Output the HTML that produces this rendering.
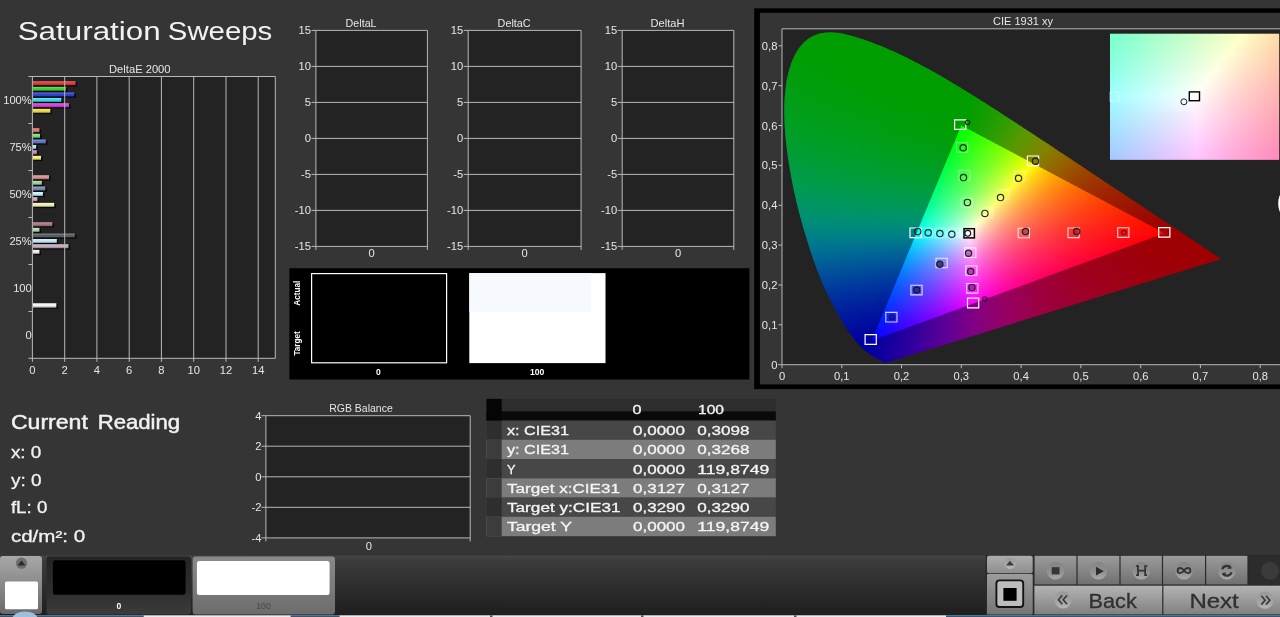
<!DOCTYPE html>
<html lang="en"><head><meta charset="utf-8"><title>Saturation Sweeps</title><style>html,body{margin:0;padding:0;background:#353535;overflow:hidden}svg{display:block;will-change:transform}</style></head><body><svg width="1280" height="617" viewBox="0 0 1280 617" font-family="Liberation Sans, sans-serif" fill="#e6e6e6" shape-rendering="auto"><defs><linearGradient id="gloss" x1="0" y1="0" x2="0" y2="1"><stop offset="0" stop-color="#fff" stop-opacity=".35"/><stop offset=".45" stop-color="#fff" stop-opacity=".05"/><stop offset="1" stop-color="#000" stop-opacity=".35"/></linearGradient><clipPath id="locus"><polygon points="886.1,362.7 885.8,362.6 885.7,362.6 885.6,362.7 885.6,362.8 885.5,362.9 885.2,362.9 884.8,362.8 884.1,362.5 883.2,362.0 882.0,361.4 880.7,360.6 879.4,359.9 878.1,359.1 876.9,358.4 875.8,357.7 874.8,357.2 873.9,356.7 873.1,356.2 872.2,355.6 871.2,355.0 870.1,354.3 868.9,353.5 867.7,352.6 866.5,351.7 865.2,350.7 863.7,349.5 862.2,348.1 860.5,346.4 858.7,344.5 856.8,342.3 854.7,339.9 852.5,337.1 850.2,333.9 847.7,330.4 845.1,326.3 842.3,321.8 839.3,316.6 836.1,311.0 832.7,304.6 829.1,297.7 825.4,290.0 821.7,281.6 818.1,272.5 814.4,262.5 810.7,251.9 807.1,240.5 803.5,228.5 800.0,215.9 796.7,203.0 793.7,189.8 791.1,176.5 788.8,163.2 786.9,150.1 785.5,137.3 784.6,124.8 784.2,112.8 784.4,101.3 785.3,90.4 786.7,80.1 788.8,70.7 791.6,62.1 795.0,54.6 799.0,48.1 803.5,42.7 808.5,38.5 813.9,35.4 819.6,33.4 825.5,32.4 831.7,32.3 837.9,32.8 844.3,33.9 850.7,35.5 857.2,37.4 863.6,39.5 870.0,41.8 876.2,44.2 882.4,46.6 888.4,49.2 894.4,51.8 900.2,54.5 906.1,57.3 911.8,60.2 917.6,63.2 923.3,66.2 929.1,69.3 934.8,72.5 940.5,75.8 946.1,79.1 951.8,82.4 957.4,85.8 963.1,89.2 968.7,92.7 974.4,96.2 980.0,99.8 985.6,103.3 991.3,106.9 997.0,110.6 1002.6,114.2 1008.2,117.9 1013.9,121.5 1019.5,125.2 1025.1,128.9 1030.7,132.6 1036.3,136.3 1041.9,139.9 1047.5,143.6 1053.0,147.3 1058.5,150.9 1063.9,154.5 1069.4,158.1 1074.7,161.7 1080.1,165.2 1085.4,168.7 1090.6,172.2 1095.7,175.7 1100.8,179.1 1105.9,182.4 1110.8,185.7 1115.7,188.9 1120.5,192.1 1125.2,195.2 1129.7,198.2 1134.2,201.2 1138.5,204.1 1142.7,206.8 1146.7,209.5 1150.5,212.1 1154.2,214.5 1157.8,216.9 1161.3,219.2 1164.7,221.5 1167.9,223.6 1171.0,225.6 1173.9,227.5 1176.6,229.3 1179.2,231.1 1181.8,232.8 1184.2,234.4 1186.4,235.8 1188.4,237.2 1190.2,238.4 1191.8,239.5 1193.6,240.6 1195.7,242.0 1198.2,243.7 1200.9,245.5 1203.5,247.2 1206.0,248.9 1208.0,250.2 1209.8,251.4 1211.2,252.4 1212.5,253.2 1213.6,253.9 1214.7,254.6 1215.7,255.3 1216.8,256.1 1218.1,256.9 1219.5,257.8 1221.2,259.0"/></clipPath><clipPath id="tri"><polygon points="1164.6,233.2 961.3,125.5 871.7,340.8"/></clipPath><linearGradient id="o0"><stop offset=".000" stop-color="#009e00"/><stop offset=".493" stop-color="#009e00"/><stop offset=".593" stop-color="#219e00"/><stop offset=".747" stop-color="#639600"/><stop offset=".864" stop-color="#897b00"/><stop offset="1.000" stop-color="#995600"/></linearGradient><linearGradient id="o1"><stop offset=".000" stop-color="#009e01"/><stop offset=".493" stop-color="#009e00"/><stop offset=".579" stop-color="#1d9e00"/><stop offset=".692" stop-color="#4d9b00"/><stop offset=".814" stop-color="#7e8700"/><stop offset=".896" stop-color="#907000"/><stop offset="1.000" stop-color="#9a5400"/></linearGradient><linearGradient id="o2"><stop offset=".000" stop-color="#009e01"/><stop offset=".489" stop-color="#009e00"/><stop offset=".575" stop-color="#1d9e00"/><stop offset=".688" stop-color="#4d9b00"/><stop offset=".810" stop-color="#7e8700"/><stop offset=".896" stop-color="#916e00"/><stop offset="1.000" stop-color="#9a5200"/></linearGradient><linearGradient id="o3"><stop offset=".000" stop-color="#009e02"/><stop offset=".489" stop-color="#019e00"/><stop offset=".575" stop-color="#1e9e00"/><stop offset=".683" stop-color="#4e9b00"/><stop offset=".805" stop-color="#7f8600"/><stop offset=".891" stop-color="#916e00"/><stop offset="1.000" stop-color="#9a5000"/></linearGradient><linearGradient id="o4"><stop offset=".000" stop-color="#009e03"/><stop offset=".484" stop-color="#009e00"/><stop offset=".570" stop-color="#1e9e00"/><stop offset=".679" stop-color="#4e9b00"/><stop offset=".801" stop-color="#7f8600"/><stop offset=".887" stop-color="#926d00"/><stop offset="1.000" stop-color="#9b4f00"/></linearGradient><linearGradient id="o5"><stop offset=".000" stop-color="#009e04"/><stop offset=".480" stop-color="#009e00"/><stop offset=".561" stop-color="#1c9e00"/><stop offset=".674" stop-color="#4e9b00"/><stop offset=".796" stop-color="#808600"/><stop offset=".882" stop-color="#926c00"/><stop offset="1.000" stop-color="#9b4d00"/></linearGradient><linearGradient id="o6"><stop offset=".000" stop-color="#009e05"/><stop offset=".480" stop-color="#019e00"/><stop offset=".561" stop-color="#1d9e00"/><stop offset=".670" stop-color="#4e9b00"/><stop offset=".792" stop-color="#808500"/><stop offset=".882" stop-color="#936a00"/><stop offset="1.000" stop-color="#9b4b00"/></linearGradient><linearGradient id="o7"><stop offset=".000" stop-color="#009e05"/><stop offset=".095" stop-color="#009e00"/><stop offset=".475" stop-color="#009e00"/><stop offset=".561" stop-color="#1f9e00"/><stop offset=".670" stop-color="#509a00"/><stop offset=".792" stop-color="#828300"/><stop offset=".878" stop-color="#936900"/><stop offset="1.000" stop-color="#9b4900"/></linearGradient><linearGradient id="o8"><stop offset=".000" stop-color="#009e06"/><stop offset=".109" stop-color="#009e00"/><stop offset=".471" stop-color="#009e00"/><stop offset=".552" stop-color="#1d9e00"/><stop offset=".665" stop-color="#509a00"/><stop offset=".787" stop-color="#828300"/><stop offset=".878" stop-color="#946700"/><stop offset="1.000" stop-color="#9c4700"/></linearGradient><linearGradient id="o9"><stop offset=".000" stop-color="#009e07"/><stop offset=".118" stop-color="#009e00"/><stop offset=".471" stop-color="#009e00"/><stop offset=".552" stop-color="#1e9e00"/><stop offset=".661" stop-color="#519a00"/><stop offset=".783" stop-color="#838200"/><stop offset=".873" stop-color="#946600"/><stop offset="1.000" stop-color="#9c4500"/></linearGradient><linearGradient id="o10"><stop offset=".000" stop-color="#009e08"/><stop offset=".131" stop-color="#009e00"/><stop offset=".466" stop-color="#009e00"/><stop offset=".548" stop-color="#1e9e00"/><stop offset=".656" stop-color="#519a00"/><stop offset=".778" stop-color="#838200"/><stop offset=".869" stop-color="#956600"/><stop offset="1.000" stop-color="#9c4400"/></linearGradient><linearGradient id="o11"><stop offset=".000" stop-color="#009e09"/><stop offset=".145" stop-color="#009e00"/><stop offset=".466" stop-color="#019e00"/><stop offset=".548" stop-color="#1f9e00"/><stop offset=".652" stop-color="#519a00"/><stop offset=".774" stop-color="#848100"/><stop offset=".864" stop-color="#956500"/><stop offset="1.000" stop-color="#9c4200"/></linearGradient><linearGradient id="o12"><stop offset=".000" stop-color="#009e0a"/><stop offset=".158" stop-color="#009e00"/><stop offset=".462" stop-color="#009e00"/><stop offset=".543" stop-color="#1f9e00"/><stop offset=".647" stop-color="#519a00"/><stop offset=".769" stop-color="#848100"/><stop offset=".864" stop-color="#966300"/><stop offset="1.000" stop-color="#9c4000"/></linearGradient><linearGradient id="o13"><stop offset=".000" stop-color="#009e0b"/><stop offset=".172" stop-color="#009e00"/><stop offset=".457" stop-color="#009e00"/><stop offset=".534" stop-color="#1d9e00"/><stop offset=".643" stop-color="#519a00"/><stop offset=".765" stop-color="#858000"/><stop offset=".860" stop-color="#966200"/><stop offset="1.000" stop-color="#9d3e00"/></linearGradient><linearGradient id="o14"><stop offset=".000" stop-color="#009e0c"/><stop offset=".181" stop-color="#009e00"/><stop offset=".457" stop-color="#019e00"/><stop offset=".538" stop-color="#209e00"/><stop offset=".643" stop-color="#549a00"/><stop offset=".760" stop-color="#858000"/><stop offset=".855" stop-color="#966100"/><stop offset="1.000" stop-color="#9d3d00"/></linearGradient><linearGradient id="o15"><stop offset=".000" stop-color="#009e0d"/><stop offset=".195" stop-color="#009e00"/><stop offset=".452" stop-color="#009e00"/><stop offset=".529" stop-color="#1e9e00"/><stop offset=".638" stop-color="#549a00"/><stop offset=".756" stop-color="#867f00"/><stop offset=".851" stop-color="#976000"/><stop offset="1.000" stop-color="#9d3b00"/></linearGradient><linearGradient id="o16"><stop offset=".000" stop-color="#009e0f"/><stop offset=".208" stop-color="#009e00"/><stop offset=".448" stop-color="#009e00"/><stop offset=".525" stop-color="#1e9e00"/><stop offset=".633" stop-color="#549a00"/><stop offset=".751" stop-color="#867f00"/><stop offset=".846" stop-color="#975f00"/><stop offset="1.000" stop-color="#9d3900"/></linearGradient><linearGradient id="o17"><stop offset=".000" stop-color="#009e10"/><stop offset=".222" stop-color="#009e00"/><stop offset=".448" stop-color="#009e00"/><stop offset=".525" stop-color="#1f9e00"/><stop offset=".629" stop-color="#549900"/><stop offset=".747" stop-color="#877e00"/><stop offset=".842" stop-color="#975e00"/><stop offset="1.000" stop-color="#9d3700"/></linearGradient><linearGradient id="o18"><stop offset=".000" stop-color="#009e11"/><stop offset=".235" stop-color="#009e00"/><stop offset=".443" stop-color="#009e00"/><stop offset=".520" stop-color="#1f9e00"/><stop offset=".624" stop-color="#590"/><stop offset=".688" stop-color="#748e00"/><stop offset=".742" stop-color="#877e00"/><stop offset=".842" stop-color="#985c00"/><stop offset="1.000" stop-color="#9d3600"/></linearGradient><linearGradient id="o19"><stop offset=".000" stop-color="#009e12"/><stop offset=".244" stop-color="#009e00"/><stop offset=".439" stop-color="#009e00"/><stop offset=".511" stop-color="#1c9e00"/><stop offset=".620" stop-color="#590"/><stop offset=".683" stop-color="#748e00"/><stop offset=".738" stop-color="#887d00"/><stop offset=".837" stop-color="#985b00"/><stop offset="1.000" stop-color="#9d3400"/></linearGradient><linearGradient id="o20"><stop offset=".000" stop-color="#009e13"/><stop offset=".258" stop-color="#009e00"/><stop offset=".439" stop-color="#009e00"/><stop offset=".516" stop-color="#209e00"/><stop offset=".615" stop-color="#590"/><stop offset=".679" stop-color="#758d00"/><stop offset=".733" stop-color="#887c00"/><stop offset=".833" stop-color="#985a00"/><stop offset="1.000" stop-color="#9d3200"/></linearGradient><linearGradient id="o21"><stop offset=".000" stop-color="#009e15"/><stop offset=".271" stop-color="#009e00"/><stop offset=".434" stop-color="#009e00"/><stop offset=".507" stop-color="#1e9e00"/><stop offset=".611" stop-color="#590"/><stop offset=".674" stop-color="#758d00"/><stop offset=".729" stop-color="#897c00"/><stop offset=".828" stop-color="#985900"/><stop offset="1.000" stop-color="#9d3100"/></linearGradient><linearGradient id="o22"><stop offset=".000" stop-color="#009e16"/><stop offset=".285" stop-color="#009e00"/><stop offset=".434" stop-color="#019e00"/><stop offset=".507" stop-color="#209e00"/><stop offset=".606" stop-color="#569900"/><stop offset=".670" stop-color="#768d00"/><stop offset=".719" stop-color="#887d00"/><stop offset=".819" stop-color="#985900"/><stop offset="1.000" stop-color="#9e2f00"/></linearGradient><linearGradient id="o23"><stop offset=".000" stop-color="#009e17"/><stop offset=".299" stop-color="#009e00"/><stop offset=".430" stop-color="#009e00"/><stop offset=".502" stop-color="#1f9e00"/><stop offset=".602" stop-color="#569900"/><stop offset=".665" stop-color="#778c00"/><stop offset=".715" stop-color="#897c00"/><stop offset=".774" stop-color="#946600"/><stop offset=".855" stop-color="#9b4c00"/><stop offset="1.000" stop-color="#9e2e00"/></linearGradient><linearGradient id="o24"><stop offset=".000" stop-color="#009e19"/><stop offset=".308" stop-color="#009e00"/><stop offset=".425" stop-color="#009e00"/><stop offset=".498" stop-color="#1f9e00"/><stop offset=".597" stop-color="#569900"/><stop offset=".656" stop-color="#758d00"/><stop offset=".710" stop-color="#897b00"/><stop offset=".774" stop-color="#956400"/><stop offset=".855" stop-color="#9b4a00"/><stop offset="1.000" stop-color="#9e2c00"/></linearGradient><linearGradient id="o25"><stop offset=".000" stop-color="#009e1a"/><stop offset=".321" stop-color="#009e00"/><stop offset=".425" stop-color="#009e00"/><stop offset=".498" stop-color="#219e00"/><stop offset=".593" stop-color="#569900"/><stop offset=".652" stop-color="#768d00"/><stop offset=".706" stop-color="#8a7b00"/><stop offset=".769" stop-color="#966300"/><stop offset=".851" stop-color="#9b4900"/><stop offset="1.000" stop-color="#9e2a00"/></linearGradient><linearGradient id="o26"><stop offset=".000" stop-color="#009e1c"/><stop offset=".335" stop-color="#009e00"/><stop offset=".421" stop-color="#009e00"/><stop offset=".493" stop-color="#209e00"/><stop offset=".588" stop-color="#579900"/><stop offset=".647" stop-color="#768d00"/><stop offset=".701" stop-color="#8a7a00"/><stop offset=".765" stop-color="#966200"/><stop offset=".846" stop-color="#9c4800"/><stop offset="1.000" stop-color="#9e2900"/></linearGradient><linearGradient id="o27"><stop offset=".000" stop-color="#009e1d"/><stop offset=".348" stop-color="#009e00"/><stop offset=".416" stop-color="#009e00"/><stop offset=".484" stop-color="#1e9e00"/><stop offset=".584" stop-color="#579900"/><stop offset=".643" stop-color="#778c00"/><stop offset=".697" stop-color="#8b7900"/><stop offset=".760" stop-color="#966100"/><stop offset=".842" stop-color="#9c4700"/><stop offset="1.000" stop-color="#9e2700"/></linearGradient><linearGradient id="o28"><stop offset=".000" stop-color="#009e1f"/><stop offset=".416" stop-color="#009e00"/><stop offset=".484" stop-color="#1f9e00"/><stop offset=".579" stop-color="#579900"/><stop offset=".638" stop-color="#778c00"/><stop offset=".692" stop-color="#8b7800"/><stop offset=".751" stop-color="#966100"/><stop offset=".837" stop-color="#9c4600"/><stop offset="1.000" stop-color="#9e2600"/></linearGradient><linearGradient id="o29"><stop offset=".000" stop-color="#009e20"/><stop offset=".412" stop-color="#009e00"/><stop offset=".480" stop-color="#1f9e00"/><stop offset=".575" stop-color="#579900"/><stop offset=".633" stop-color="#788b00"/><stop offset=".688" stop-color="#8c7800"/><stop offset=".747" stop-color="#966000"/><stop offset=".833" stop-color="#9c4500"/><stop offset="1.000" stop-color="#9e2400"/></linearGradient><linearGradient id="o30"><stop offset=".000" stop-color="#009e22"/><stop offset=".407" stop-color="#009e00"/><stop offset=".471" stop-color="#1c9e00"/><stop offset=".561" stop-color="#529a00"/><stop offset=".643" stop-color="#7f8600"/><stop offset=".715" stop-color="#936a00"/><stop offset=".846" stop-color="#9d3f00"/><stop offset="1.000" stop-color="#9e2300"/></linearGradient><linearGradient id="o31"><stop offset=".000" stop-color="#009e24"/><stop offset=".407" stop-color="#009e00"/><stop offset=".471" stop-color="#1e9e00"/><stop offset=".557" stop-color="#529a00"/><stop offset=".633" stop-color="#7d8800"/><stop offset=".706" stop-color="#936b00"/><stop offset=".842" stop-color="#9d3e00"/><stop offset="1.000" stop-color="#9e2100"/></linearGradient><linearGradient id="o32"><stop offset=".000" stop-color="#009e25"/><stop offset=".403" stop-color="#009e01"/><stop offset=".466" stop-color="#1e9e00"/><stop offset=".552" stop-color="#539a00"/><stop offset=".629" stop-color="#7e8700"/><stop offset=".701" stop-color="#936a00"/><stop offset=".837" stop-color="#9d3d00"/><stop offset="1.000" stop-color="#9e2000"/></linearGradient><linearGradient id="o33"><stop offset=".000" stop-color="#009e27"/><stop offset=".403" stop-color="#019e02"/><stop offset=".466" stop-color="#209e00"/><stop offset=".548" stop-color="#539a00"/><stop offset=".624" stop-color="#7f8600"/><stop offset=".697" stop-color="#946900"/><stop offset=".833" stop-color="#9d3c00"/><stop offset="1.000" stop-color="#9e1f00"/></linearGradient><linearGradient id="o34"><stop offset=".000" stop-color="#009e29"/><stop offset=".398" stop-color="#009e04"/><stop offset=".462" stop-color="#1f9e00"/><stop offset=".543" stop-color="#539a00"/><stop offset=".620" stop-color="#7f8600"/><stop offset=".692" stop-color="#946800"/><stop offset=".828" stop-color="#9d3b00"/><stop offset="1.000" stop-color="#9e1d00"/></linearGradient><linearGradient id="o35"><stop offset=".000" stop-color="#009e2b"/><stop offset=".394" stop-color="#009e06"/><stop offset=".452" stop-color="#1c9e00"/><stop offset=".538" stop-color="#539a00"/><stop offset=".615" stop-color="#808500"/><stop offset=".688" stop-color="#946700"/><stop offset=".824" stop-color="#9d3a00"/><stop offset="1.000" stop-color="#9e1c00"/></linearGradient><linearGradient id="o36"><stop offset=".000" stop-color="#009e2d"/><stop offset=".394" stop-color="#009e08"/><stop offset=".452" stop-color="#1e9e01"/><stop offset=".534" stop-color="#549a00"/><stop offset=".611" stop-color="#818500"/><stop offset=".683" stop-color="#956500"/><stop offset=".824" stop-color="#9d3700"/><stop offset="1.000" stop-color="#9e1a00"/></linearGradient><linearGradient id="o37"><stop offset=".000" stop-color="#009e2f"/><stop offset=".389" stop-color="#009e0b"/><stop offset=".448" stop-color="#1e9e03"/><stop offset=".525" stop-color="#519a00"/><stop offset=".602" stop-color="#7f8600"/><stop offset=".674" stop-color="#946600"/><stop offset=".814" stop-color="#9d3700"/><stop offset="1.000" stop-color="#9e1900"/></linearGradient><linearGradient id="o38"><stop offset=".000" stop-color="#009d31"/><stop offset=".385" stop-color="#009e0d"/><stop offset=".439" stop-color="#1b9e06"/><stop offset=".520" stop-color="#519a00"/><stop offset=".597" stop-color="#808500"/><stop offset=".670" stop-color="#956500"/><stop offset=".814" stop-color="#9d3500"/><stop offset="1.000" stop-color="#9e1800"/></linearGradient><linearGradient id="o39"><stop offset=".000" stop-color="#009d33"/><stop offset=".385" stop-color="#009e0f"/><stop offset=".439" stop-color="#1d9e08"/><stop offset=".516" stop-color="#519a00"/><stop offset=".593" stop-color="#818500"/><stop offset=".665" stop-color="#956400"/><stop offset=".810" stop-color="#9d3400"/><stop offset="1.000" stop-color="#9e1600"/></linearGradient><linearGradient id="o40"><stop offset=".000" stop-color="#009d35"/><stop offset=".380" stop-color="#009e12"/><stop offset=".434" stop-color="#1c9e0b"/><stop offset=".511" stop-color="#529a01"/><stop offset=".584" stop-color="#7f8600"/><stop offset=".656" stop-color="#956500"/><stop offset=".724" stop-color="#9b4a00"/><stop offset=".801" stop-color="#9d3400"/><stop offset="1.000" stop-color="#9e1500"/></linearGradient><linearGradient id="o41"><stop offset=".000" stop-color="#009d38"/><stop offset=".380" stop-color="#019e14"/><stop offset=".434" stop-color="#1f9e0d"/><stop offset=".507" stop-color="#529a03"/><stop offset=".579" stop-color="#808500"/><stop offset=".652" stop-color="#956400"/><stop offset=".724" stop-color="#9c4700"/><stop offset=".801" stop-color="#9d3200"/><stop offset="1.000" stop-color="#9e1400"/></linearGradient><linearGradient id="o42"><stop offset=".000" stop-color="#009d3a"/><stop offset=".376" stop-color="#009e17"/><stop offset=".430" stop-color="#1e9e10"/><stop offset=".502" stop-color="#529a05"/><stop offset=".575" stop-color="#818500"/><stop offset=".647" stop-color="#966200"/><stop offset=".719" stop-color="#9c4600"/><stop offset=".796" stop-color="#9d3100"/><stop offset="1.000" stop-color="#9e1300"/></linearGradient><linearGradient id="o43"><stop offset=".000" stop-color="#009d3c"/><stop offset=".371" stop-color="#009e1a"/><stop offset=".421" stop-color="#1b9e13"/><stop offset=".498" stop-color="#529a08"/><stop offset=".570" stop-color="#818400"/><stop offset=".643" stop-color="#966100"/><stop offset=".715" stop-color="#9c4400"/><stop offset=".792" stop-color="#9e2f00"/><stop offset="1.000" stop-color="#9e1100"/></linearGradient><linearGradient id="o44"><stop offset=".000" stop-color="#009d3f"/><stop offset=".371" stop-color="#009e1d"/><stop offset=".421" stop-color="#1d9e16"/><stop offset=".489" stop-color="#4f9a0c"/><stop offset=".561" stop-color="#808501"/><stop offset=".633" stop-color="#966200"/><stop offset=".706" stop-color="#9c4500"/><stop offset=".783" stop-color="#9e2f00"/><stop offset="1.000" stop-color="#9e1000"/></linearGradient><linearGradient id="o45"><stop offset=".000" stop-color="#009c41"/><stop offset=".367" stop-color="#009e20"/><stop offset=".416" stop-color="#1d9e19"/><stop offset=".484" stop-color="#4f9a0f"/><stop offset=".557" stop-color="#818503"/><stop offset=".629" stop-color="#966100"/><stop offset=".701" stop-color="#9c4300"/><stop offset=".783" stop-color="#9e2d00"/><stop offset="1.000" stop-color="#9e0f00"/></linearGradient><linearGradient id="o46"><stop offset=".000" stop-color="#009c44"/><stop offset=".362" stop-color="#009e23"/><stop offset=".407" stop-color="#199e1d"/><stop offset=".480" stop-color="#509a12"/><stop offset=".552" stop-color="#828406"/><stop offset=".620" stop-color="#966100"/><stop offset=".692" stop-color="#9c4300"/><stop offset=".774" stop-color="#9e2d00"/><stop offset="1.000" stop-color="#9e0e00"/></linearGradient><linearGradient id="o47"><stop offset=".000" stop-color="#009c46"/><stop offset=".362" stop-color="#009e26"/><stop offset=".412" stop-color="#1f9e20"/><stop offset=".475" stop-color="#509a16"/><stop offset=".548" stop-color="#828309"/><stop offset=".615" stop-color="#976000"/><stop offset=".688" stop-color="#9c4200"/><stop offset=".769" stop-color="#9e2c00"/><stop offset="1.000" stop-color="#9e0d00"/></linearGradient><linearGradient id="o48"><stop offset=".000" stop-color="#009b49"/><stop offset=".357" stop-color="#009e2a"/><stop offset=".403" stop-color="#1b9e24"/><stop offset=".471" stop-color="#509a1a"/><stop offset=".543" stop-color="#83820c"/><stop offset=".611" stop-color="#975f01"/><stop offset=".683" stop-color="#9c4100"/><stop offset=".769" stop-color="#9e2a00"/><stop offset="1.000" stop-color="#9e0c00"/></linearGradient><linearGradient id="o49"><stop offset=".000" stop-color="#009b4c"/><stop offset=".357" stop-color="#019e2d"/><stop offset=".403" stop-color="#1d9e28"/><stop offset=".466" stop-color="#519a1e"/><stop offset=".534" stop-color="#828410"/><stop offset=".602" stop-color="#975f04"/><stop offset=".674" stop-color="#9c4100"/><stop offset=".760" stop-color="#9e2900"/><stop offset="1.000" stop-color="#9e0a00"/></linearGradient><linearGradient id="o50"><stop offset=".000" stop-color="#009b4e"/><stop offset=".353" stop-color="#009d31"/><stop offset=".398" stop-color="#1d9e2c"/><stop offset=".462" stop-color="#519a22"/><stop offset=".529" stop-color="#828313"/><stop offset=".597" stop-color="#975e06"/><stop offset=".670" stop-color="#9d3f00"/><stop offset=".756" stop-color="#9e2800"/><stop offset=".864" stop-color="#9e1600"/><stop offset="1.000" stop-color="#9e0900"/></linearGradient><linearGradient id="o51"><stop offset=".000" stop-color="#009a51"/><stop offset=".348" stop-color="#009d35"/><stop offset=".389" stop-color="#199d30"/><stop offset=".452" stop-color="#4d9b27"/><stop offset=".520" stop-color="#818418"/><stop offset=".588" stop-color="#975f09"/><stop offset=".665" stop-color="#9d3e00"/><stop offset=".751" stop-color="#9e2700"/><stop offset=".860" stop-color="#9e1500"/><stop offset="1.000" stop-color="#9e0800"/></linearGradient><linearGradient id="o52"><stop offset=".000" stop-color="#009a54"/><stop offset=".348" stop-color="#009d39"/><stop offset=".394" stop-color="#1f9d34"/><stop offset=".448" stop-color="#4d9a2b"/><stop offset=".516" stop-color="#82831c"/><stop offset=".584" stop-color="#975d0c"/><stop offset=".661" stop-color="#9d3c01"/><stop offset=".747" stop-color="#9e2600"/><stop offset=".860" stop-color="#9e1400"/><stop offset="1.000" stop-color="#9e0700"/></linearGradient><linearGradient id="o53"><stop offset=".000" stop-color="#009957"/><stop offset=".344" stop-color="#009d3e"/><stop offset=".385" stop-color="#1b9d39"/><stop offset=".443" stop-color="#4d9a30"/><stop offset=".511" stop-color="#838320"/><stop offset=".579" stop-color="#985c0f"/><stop offset=".652" stop-color="#9d3c03"/><stop offset=".742" stop-color="#9e2400"/><stop offset=".855" stop-color="#9e1300"/><stop offset="1.000" stop-color="#9e0600"/></linearGradient><linearGradient id="o54"><stop offset=".000" stop-color="#00985a"/><stop offset=".339" stop-color="#009c42"/><stop offset=".380" stop-color="#1a9d3e"/><stop offset=".439" stop-color="#4e9a35"/><stop offset=".507" stop-color="#838224"/><stop offset=".570" stop-color="#985d12"/><stop offset=".643" stop-color="#9d3c06"/><stop offset=".733" stop-color="#9e2400"/><stop offset=".851" stop-color="#9e1200"/><stop offset="1.000" stop-color="#9e0500"/></linearGradient><linearGradient id="o55"><stop offset=".000" stop-color="#00975d"/><stop offset=".339" stop-color="#009c47"/><stop offset=".380" stop-color="#1d9c42"/><stop offset=".434" stop-color="#4e9a3a"/><stop offset=".502" stop-color="#848128"/><stop offset=".566" stop-color="#985b16"/><stop offset=".638" stop-color="#9d3b08"/><stop offset=".729" stop-color="#9e2300"/><stop offset=".846" stop-color="#9e1100"/><stop offset="1.000" stop-color="#9e0400"/></linearGradient><linearGradient id="o56"><stop offset=".000" stop-color="#009660"/><stop offset=".335" stop-color="#009b4b"/><stop offset=".376" stop-color="#1c9c47"/><stop offset=".430" stop-color="#4e9940"/><stop offset=".493" stop-color="#82822e"/><stop offset=".561" stop-color="#985919"/><stop offset=".638" stop-color="#9d3809"/><stop offset=".729" stop-color="#9e2000"/><stop offset=".846" stop-color="#9e0f00"/><stop offset="1.000" stop-color="#9e0300"/></linearGradient><linearGradient id="o57"><stop offset=".000" stop-color="#009563"/><stop offset=".335" stop-color="#019a50"/><stop offset=".376" stop-color="#1f9b4c"/><stop offset=".425" stop-color="#4e9845"/><stop offset=".489" stop-color="#838133"/><stop offset=".552" stop-color="#985a1d"/><stop offset=".629" stop-color="#9d380c"/><stop offset=".719" stop-color="#9e2001"/><stop offset=".842" stop-color="#9e0e00"/><stop offset="1.000" stop-color="#9e0200"/></linearGradient><linearGradient id="o58"><stop offset=".000" stop-color="#009467"/><stop offset=".330" stop-color="#095"/><stop offset=".376" stop-color="#229a51"/><stop offset=".443" stop-color="#649346"/><stop offset=".489" stop-color="#877d36"/><stop offset=".543" stop-color="#985b22"/><stop offset=".620" stop-color="#9d380f"/><stop offset=".710" stop-color="#9e2003"/><stop offset=".837" stop-color="#9e0d00"/><stop offset="1.000" stop-color="#9e0200"/></linearGradient><linearGradient id="o59"><stop offset=".000" stop-color="#00936a"/><stop offset=".326" stop-color="#00985a"/><stop offset=".371" stop-color="#219957"/><stop offset=".439" stop-color="#64924b"/><stop offset=".484" stop-color="#877b3b"/><stop offset=".538" stop-color="#985926"/><stop offset=".615" stop-color="#9d3611"/><stop offset=".710" stop-color="#9e1d04"/><stop offset=".837" stop-color="#9e0c00"/><stop offset="1.000" stop-color="#9e0100"/></linearGradient><linearGradient id="o60"><stop offset=".000" stop-color="#00926d"/><stop offset=".326" stop-color="#01975f"/><stop offset=".371" stop-color="#24985c"/><stop offset=".434" stop-color="#649051"/><stop offset=".480" stop-color="#887a40"/><stop offset=".529" stop-color="#985a2b"/><stop offset=".606" stop-color="#9d3615"/><stop offset=".701" stop-color="#9e1d06"/><stop offset=".833" stop-color="#9e0b00"/><stop offset="1.000" stop-color="#9e0000"/></linearGradient><linearGradient id="o61"><stop offset=".000" stop-color="#009070"/><stop offset=".321" stop-color="#009564"/><stop offset=".367" stop-color="#239662"/><stop offset=".430" stop-color="#648f58"/><stop offset=".475" stop-color="#887846"/><stop offset=".525" stop-color="#98582f"/><stop offset=".602" stop-color="#9d3417"/><stop offset=".701" stop-color="#9e1b07"/><stop offset=".837" stop-color="#9e0900"/><stop offset="1.000" stop-color="#9e0000"/></linearGradient><linearGradient id="o62"><stop offset=".000" stop-color="#008f73"/><stop offset=".321" stop-color="#019369"/><stop offset=".362" stop-color="#229467"/><stop offset=".425" stop-color="#648d5e"/><stop offset=".471" stop-color="#89764b"/><stop offset=".520" stop-color="#985633"/><stop offset=".597" stop-color="#9d321a"/><stop offset=".697" stop-color="#9e1909"/><stop offset=".842" stop-color="#9e0700"/><stop offset="1.000" stop-color="#9e0000"/></linearGradient><linearGradient id="o63"><stop offset=".000" stop-color="#008d76"/><stop offset=".317" stop-color="#00916f"/><stop offset=".357" stop-color="#21926d"/><stop offset=".421" stop-color="#648b64"/><stop offset=".466" stop-color="#897450"/><stop offset=".516" stop-color="#995437"/><stop offset=".597" stop-color="#9d2f1b"/><stop offset=".697" stop-color="#9e170a"/><stop offset=".810" stop-color="#9e0900"/><stop offset="1.000" stop-color="#9e0000"/></linearGradient><linearGradient id="o64"><stop offset=".000" stop-color="#008b79"/><stop offset=".312" stop-color="#008e74"/><stop offset=".353" stop-color="#208f72"/><stop offset=".416" stop-color="#63886a"/><stop offset=".462" stop-color="#897256"/><stop offset=".511" stop-color="#99523b"/><stop offset=".588" stop-color="#9d2f1f"/><stop offset=".692" stop-color="#9e160c"/><stop offset=".824" stop-color="#9e0600"/><stop offset="1.000" stop-color="#9e0000"/></linearGradient><linearGradient id="o65"><stop offset=".000" stop-color="#00897c"/><stop offset=".312" stop-color="#018b78"/><stop offset=".353" stop-color="#238c77"/><stop offset=".412" stop-color="#628570"/><stop offset=".457" stop-color="#886f5b"/><stop offset=".507" stop-color="#994f40"/><stop offset=".588" stop-color="#9e2b21"/><stop offset=".692" stop-color="#9e140d"/><stop offset=".837" stop-color="#9e0400"/><stop offset="1.000" stop-color="#9e0000"/></linearGradient><linearGradient id="o66"><stop offset=".000" stop-color="#00867f"/><stop offset=".308" stop-color="#00887d"/><stop offset=".348" stop-color="#21887c"/><stop offset=".407" stop-color="#618276"/><stop offset=".452" stop-color="#886c61"/><stop offset=".502" stop-color="#994d44"/><stop offset=".584" stop-color="#9e2a24"/><stop offset=".688" stop-color="#9e130f"/><stop offset=".846" stop-color="#9e0200"/><stop offset="1.000" stop-color="#9e0000"/></linearGradient><linearGradient id="o67"><stop offset=".000" stop-color="#008481"/><stop offset=".303" stop-color="#008481"/><stop offset=".344" stop-color="#208481"/><stop offset=".407" stop-color="#647d7a"/><stop offset=".448" stop-color="#876966"/><stop offset=".498" stop-color="#994b48"/><stop offset=".579" stop-color="#9e2826"/><stop offset=".688" stop-color="#9e1110"/><stop offset=".855" stop-color="#9e0100"/><stop offset="1.000" stop-color="#9e0000"/></linearGradient><linearGradient id="o68"><stop offset=".000" stop-color="#008184"/><stop offset=".303" stop-color="#018085"/><stop offset=".339" stop-color="#1e8085"/><stop offset=".385" stop-color="#4e7d83"/><stop offset=".430" stop-color="#7c6e73"/><stop offset=".462" stop-color="#8f5b60"/><stop offset=".498" stop-color="#99464a"/><stop offset=".579" stop-color="#9e2528"/><stop offset=".688" stop-color="#9e0f11"/><stop offset=".846" stop-color="#9e0001"/><stop offset="1.000" stop-color="#9e0000"/></linearGradient><linearGradient id="o69"><stop offset=".000" stop-color="#007f86"/><stop offset=".299" stop-color="#007c89"/><stop offset=".339" stop-color="#217b89"/><stop offset=".403" stop-color="#657382"/><stop offset=".443" stop-color="#88606e"/><stop offset=".493" stop-color="#99434e"/><stop offset=".575" stop-color="#9e232b"/><stop offset=".683" stop-color="#9e0d13"/><stop offset=".833" stop-color="#9e0003"/><stop offset="1.000" stop-color="#9e0000"/></linearGradient><linearGradient id="o70"><stop offset=".000" stop-color="#007c89"/><stop offset=".299" stop-color="#01778c"/><stop offset=".339" stop-color="#23768c"/><stop offset=".398" stop-color="#636e86"/><stop offset=".443" stop-color="#895a70"/><stop offset=".493" stop-color="#993e50"/><stop offset=".575" stop-color="#9e202c"/><stop offset=".679" stop-color="#9e0c14"/><stop offset=".814" stop-color="#9e0005"/><stop offset="1.000" stop-color="#9e0000"/></linearGradient><linearGradient id="o71"><stop offset=".000" stop-color="#00798b"/><stop offset=".294" stop-color="#00728f"/><stop offset=".335" stop-color="#217190"/><stop offset=".398" stop-color="#656889"/><stop offset=".439" stop-color="#875675"/><stop offset=".489" stop-color="#983b54"/><stop offset=".570" stop-color="#9d1e2f"/><stop offset=".674" stop-color="#9e0b16"/><stop offset=".842" stop-color="#9e0004"/><stop offset="1.000" stop-color="#9e0000"/></linearGradient><linearGradient id="o72"><stop offset=".000" stop-color="#00758d"/><stop offset=".290" stop-color="#006d91"/><stop offset=".330" stop-color="#1f6b92"/><stop offset=".394" stop-color="#62638c"/><stop offset=".439" stop-color="#885076"/><stop offset=".489" stop-color="#983756"/><stop offset=".570" stop-color="#9d1b30"/><stop offset=".674" stop-color="#9e0917"/><stop offset=".837" stop-color="#9e0005"/><stop offset="1.000" stop-color="#9e0000"/></linearGradient><linearGradient id="o73"><stop offset=".000" stop-color="#00728f"/><stop offset=".290" stop-color="#016894"/><stop offset=".330" stop-color="#226694"/><stop offset=".394" stop-color="#635c8e"/><stop offset=".439" stop-color="#884a77"/><stop offset=".489" stop-color="#983257"/><stop offset=".570" stop-color="#9d1832"/><stop offset=".674" stop-color="#9e0719"/><stop offset=".837" stop-color="#9e0006"/><stop offset="1.000" stop-color="#9e0000"/></linearGradient><linearGradient id="o74"><stop offset=".000" stop-color="#006f91"/><stop offset=".285" stop-color="#006396"/><stop offset=".330" stop-color="#246096"/><stop offset=".394" stop-color="#65568f"/><stop offset=".439" stop-color="#884478"/><stop offset=".489" stop-color="#982e58"/><stop offset=".570" stop-color="#9d1533"/><stop offset=".674" stop-color="#9e051a"/><stop offset=".833" stop-color="#9e0007"/><stop offset="1.000" stop-color="#9e0000"/></linearGradient><linearGradient id="o75"><stop offset=".000" stop-color="#006b92"/><stop offset=".281" stop-color="#005e97"/><stop offset=".321" stop-color="#1e5b98"/><stop offset=".389" stop-color="#615092"/><stop offset=".439" stop-color="#883e79"/><stop offset=".489" stop-color="#98295a"/><stop offset=".570" stop-color="#9d1234"/><stop offset=".674" stop-color="#9e041b"/><stop offset=".828" stop-color="#9e0008"/><stop offset="1.000" stop-color="#9e0000"/></linearGradient><linearGradient id="o76"><stop offset=".000" stop-color="#006894"/><stop offset=".281" stop-color="#015998"/><stop offset=".326" stop-color="#245599"/><stop offset=".389" stop-color="#624a93"/><stop offset=".434" stop-color="#863a7d"/><stop offset=".489" stop-color="#98255b"/><stop offset=".570" stop-color="#9d1036"/><stop offset=".674" stop-color="#9e021c"/><stop offset=".824" stop-color="#9e0009"/><stop offset="1.000" stop-color="#9e0000"/></linearGradient><linearGradient id="o77"><stop offset=".000" stop-color="#006495"/><stop offset=".276" stop-color="#00549a"/><stop offset=".321" stop-color="#21509a"/><stop offset=".389" stop-color="#634493"/><stop offset=".434" stop-color="#86357e"/><stop offset=".489" stop-color="#98215c"/><stop offset=".570" stop-color="#9d0d37"/><stop offset=".674" stop-color="#9e011d"/><stop offset=".819" stop-color="#9e000a"/><stop offset="1.000" stop-color="#9e0000"/></linearGradient><linearGradient id="o78"><stop offset=".000" stop-color="#006196"/><stop offset=".276" stop-color="#014f9b"/><stop offset=".321" stop-color="#234a9b"/><stop offset=".389" stop-color="#643e94"/><stop offset=".439" stop-color="#882e7c"/><stop offset=".489" stop-color="#971d5d"/><stop offset=".570" stop-color="#9d0b38"/><stop offset=".674" stop-color="#9e001e"/><stop offset=".814" stop-color="#9e000c"/><stop offset="1.000" stop-color="#9e0000"/></linearGradient><linearGradient id="o79"><stop offset=".000" stop-color="#005d97"/><stop offset=".271" stop-color="#004a9b"/><stop offset=".317" stop-color="#21459c"/><stop offset=".385" stop-color="#603a95"/><stop offset=".434" stop-color="#862b7f"/><stop offset=".489" stop-color="#97195e"/><stop offset=".570" stop-color="#9d0839"/><stop offset=".674" stop-color="#9e001f"/><stop offset=".814" stop-color="#9e000c"/><stop offset="1.000" stop-color="#9e0001"/></linearGradient><linearGradient id="o80"><stop offset=".000" stop-color="#005a98"/><stop offset=".267" stop-color="#00469c"/><stop offset=".312" stop-color="#1f409c"/><stop offset=".385" stop-color="#613495"/><stop offset=".434" stop-color="#85267f"/><stop offset=".493" stop-color="#98155c"/><stop offset=".575" stop-color="#9d0639"/><stop offset=".679" stop-color="#9e001f"/><stop offset=".819" stop-color="#9e000d"/><stop offset="1.000" stop-color="#9e0001"/></linearGradient><linearGradient id="o81"><stop offset=".000" stop-color="#005699"/><stop offset=".267" stop-color="#01419c"/><stop offset=".312" stop-color="#213b9d"/><stop offset=".385" stop-color="#612f96"/><stop offset=".439" stop-color="#87207d"/><stop offset=".493" stop-color="#97115d"/><stop offset=".575" stop-color="#9d043a"/><stop offset=".679" stop-color="#9e0020"/><stop offset=".819" stop-color="#9e000e"/><stop offset="1.000" stop-color="#9e0002"/></linearGradient><linearGradient id="o82"><stop offset=".000" stop-color="#00529a"/><stop offset=".262" stop-color="#003c9d"/><stop offset=".312" stop-color="#22369d"/><stop offset=".385" stop-color="#622a96"/><stop offset=".439" stop-color="#871c7e"/><stop offset=".493" stop-color="#970e5e"/><stop offset=".575" stop-color="#9d023b"/><stop offset=".679" stop-color="#9e0021"/><stop offset=".819" stop-color="#9e000e"/><stop offset="1.000" stop-color="#9e0002"/></linearGradient><linearGradient id="o83"><stop offset=".000" stop-color="#004f9b"/><stop offset=".262" stop-color="#01389d"/><stop offset=".312" stop-color="#24329d"/><stop offset=".385" stop-color="#622596"/><stop offset=".439" stop-color="#87177e"/><stop offset=".493" stop-color="#970b5f"/><stop offset=".579" stop-color="#9d003b"/><stop offset=".683" stop-color="#9e0021"/><stop offset=".819" stop-color="#9e000f"/><stop offset="1.000" stop-color="#9e0003"/></linearGradient><linearGradient id="o84"><stop offset=".000" stop-color="#004b9b"/><stop offset=".258" stop-color="#00349d"/><stop offset=".308" stop-color="#222e9d"/><stop offset=".385" stop-color="#632096"/><stop offset=".439" stop-color="#87147e"/><stop offset=".493" stop-color="#960860"/><stop offset=".579" stop-color="#9d003c"/><stop offset=".683" stop-color="#9e0022"/><stop offset=".819" stop-color="#9e0010"/><stop offset="1.000" stop-color="#9e0003"/></linearGradient><linearGradient id="o85"><stop offset=".000" stop-color="#00489c"/><stop offset=".253" stop-color="#00309e"/><stop offset=".303" stop-color="#202a9e"/><stop offset=".380" stop-color="#5f1d97"/><stop offset=".434" stop-color="#841181"/><stop offset=".493" stop-color="#960661"/><stop offset=".579" stop-color="#9d003d"/><stop offset=".683" stop-color="#9e0023"/><stop offset=".819" stop-color="#9e0011"/><stop offset="1.000" stop-color="#9e0004"/></linearGradient><linearGradient id="o86"><stop offset=".000" stop-color="#00449c"/><stop offset=".253" stop-color="#012c9e"/><stop offset=".303" stop-color="#21259e"/><stop offset=".380" stop-color="#601997"/><stop offset=".439" stop-color="#860c7f"/><stop offset=".498" stop-color="#970260"/><stop offset=".584" stop-color="#9d003d"/><stop offset=".688" stop-color="#9e0023"/><stop offset=".824" stop-color="#9e0011"/><stop offset="1.000" stop-color="#9e0004"/></linearGradient><linearGradient id="o87"><stop offset=".000" stop-color="#00419c"/><stop offset=".249" stop-color="#00299e"/><stop offset=".303" stop-color="#22219e"/><stop offset=".380" stop-color="#601596"/><stop offset=".439" stop-color="#86097f"/><stop offset=".498" stop-color="#960060"/><stop offset=".584" stop-color="#9d003e"/><stop offset=".688" stop-color="#9e0024"/><stop offset=".824" stop-color="#9e0012"/><stop offset="1.000" stop-color="#9e0005"/></linearGradient><linearGradient id="o88"><stop offset=".000" stop-color="#003e9d"/><stop offset=".244" stop-color="#00259e"/><stop offset=".299" stop-color="#211e9e"/><stop offset=".380" stop-color="#611196"/><stop offset=".439" stop-color="#860680"/><stop offset=".498" stop-color="#960061"/><stop offset=".584" stop-color="#9d003f"/><stop offset=".688" stop-color="#9e0025"/><stop offset=".824" stop-color="#9e0013"/><stop offset="1.000" stop-color="#9e0005"/></linearGradient><linearGradient id="o89"><stop offset=".000" stop-color="#003b9d"/><stop offset=".244" stop-color="#01229e"/><stop offset=".299" stop-color="#221a9e"/><stop offset=".380" stop-color="#610d96"/><stop offset=".439" stop-color="#850380"/><stop offset=".498" stop-color="#960062"/><stop offset=".584" stop-color="#9c0040"/><stop offset=".688" stop-color="#9e0026"/><stop offset=".824" stop-color="#9e0013"/><stop offset="1.000" stop-color="#9e0006"/></linearGradient><linearGradient id="o90"><stop offset=".000" stop-color="#00379d"/><stop offset=".240" stop-color="#001f9e"/><stop offset=".294" stop-color="#20179e"/><stop offset=".380" stop-color="#610a96"/><stop offset=".439" stop-color="#850180"/><stop offset=".498" stop-color="#960063"/><stop offset=".588" stop-color="#9d003f"/><stop offset=".692" stop-color="#9e0026"/><stop offset=".828" stop-color="#9e0014"/><stop offset="1.000" stop-color="#9e0007"/></linearGradient><linearGradient id="o91"><stop offset=".000" stop-color="#00349d"/><stop offset=".240" stop-color="#011b9e"/><stop offset=".294" stop-color="#21149e"/><stop offset=".380" stop-color="#620796"/><stop offset=".439" stop-color="#850080"/><stop offset=".498" stop-color="#950064"/><stop offset=".588" stop-color="#9c0040"/><stop offset=".692" stop-color="#9e0027"/><stop offset=".828" stop-color="#9e0014"/><stop offset="1.000" stop-color="#9e0007"/></linearGradient><linearGradient id="o92"><stop offset=".000" stop-color="#00319d"/><stop offset=".235" stop-color="#00199e"/><stop offset=".294" stop-color="#23119e"/><stop offset=".376" stop-color="#5f0497"/><stop offset=".434" stop-color="#830083"/><stop offset=".498" stop-color="#950064"/><stop offset=".588" stop-color="#9c0041"/><stop offset=".692" stop-color="#9e0028"/><stop offset=".828" stop-color="#9e0015"/><stop offset="1.000" stop-color="#9e0008"/></linearGradient><linearGradient id="o93"><stop offset=".000" stop-color="#002e9e"/><stop offset=".231" stop-color="#00169e"/><stop offset=".290" stop-color="#210e9e"/><stop offset=".376" stop-color="#5f0297"/><stop offset=".439" stop-color="#840081"/><stop offset=".502" stop-color="#960063"/><stop offset=".593" stop-color="#9c0041"/><stop offset=".697" stop-color="#9e0028"/><stop offset=".828" stop-color="#9e0016"/><stop offset="1.000" stop-color="#9e0008"/></linearGradient><linearGradient id="o94"><stop offset=".000" stop-color="#002b9e"/><stop offset=".231" stop-color="#01139e"/><stop offset=".290" stop-color="#220b9e"/><stop offset=".376" stop-color="#5f0097"/><stop offset=".439" stop-color="#840081"/><stop offset=".502" stop-color="#950064"/><stop offset=".593" stop-color="#9c0041"/><stop offset=".697" stop-color="#9e0029"/><stop offset=".828" stop-color="#9e0017"/><stop offset="1.000" stop-color="#9e0009"/></linearGradient><linearGradient id="o95"><stop offset=".000" stop-color="#00299e"/><stop offset=".226" stop-color="#00109e"/><stop offset=".285" stop-color="#20099e"/><stop offset=".376" stop-color="#600097"/><stop offset=".439" stop-color="#840081"/><stop offset=".502" stop-color="#950064"/><stop offset=".593" stop-color="#9c0042"/><stop offset=".697" stop-color="#9e002a"/><stop offset=".828" stop-color="#9e0017"/><stop offset="1.000" stop-color="#9e0009"/></linearGradient><linearGradient id="o96"><stop offset=".000" stop-color="#00269e"/><stop offset=".226" stop-color="#010e9e"/><stop offset=".285" stop-color="#22069e"/><stop offset=".376" stop-color="#600097"/><stop offset=".439" stop-color="#840082"/><stop offset=".502" stop-color="#950065"/><stop offset=".593" stop-color="#9c0043"/><stop offset=".697" stop-color="#9e002b"/><stop offset=".828" stop-color="#9e0018"/><stop offset="1.000" stop-color="#9e000a"/></linearGradient><linearGradient id="o97"><stop offset=".000" stop-color="#00239e"/><stop offset=".222" stop-color="#010b9e"/><stop offset=".285" stop-color="#23049e"/><stop offset=".376" stop-color="#600096"/><stop offset=".439" stop-color="#830082"/><stop offset=".502" stop-color="#950066"/><stop offset=".597" stop-color="#9c0043"/><stop offset=".701" stop-color="#9e002b"/><stop offset=".833" stop-color="#9e0018"/><stop offset="1.000" stop-color="#9e000a"/></linearGradient><linearGradient id="o98"><stop offset=".000" stop-color="#00219e"/><stop offset=".217" stop-color="#00099e"/><stop offset=".281" stop-color="#21029e"/><stop offset=".371" stop-color="#5e0097"/><stop offset=".434" stop-color="#810084"/><stop offset=".502" stop-color="#940066"/><stop offset=".597" stop-color="#9c0044"/><stop offset=".701" stop-color="#9e002b"/><stop offset=".833" stop-color="#9e0019"/><stop offset="1.000" stop-color="#9e000b"/></linearGradient><linearGradient id="o99"><stop offset=".000" stop-color="#001e9e"/><stop offset=".217" stop-color="#01079e"/><stop offset=".281" stop-color="#22009e"/><stop offset=".371" stop-color="#5e0097"/><stop offset=".434" stop-color="#810084"/><stop offset=".502" stop-color="#940067"/><stop offset=".597" stop-color="#9c0044"/><stop offset=".701" stop-color="#9e002c"/><stop offset=".833" stop-color="#9e001a"/><stop offset="1.000" stop-color="#9e000c"/></linearGradient><linearGradient id="o100"><stop offset=".000" stop-color="#001c9e"/><stop offset=".213" stop-color="#00059e"/><stop offset=".276" stop-color="#21009e"/><stop offset=".371" stop-color="#5e0097"/><stop offset=".439" stop-color="#830082"/><stop offset=".507" stop-color="#950066"/><stop offset=".602" stop-color="#9c0044"/><stop offset=".706" stop-color="#9e002c"/><stop offset=".837" stop-color="#9e001a"/><stop offset="1.000" stop-color="#9e000c"/></linearGradient><linearGradient id="o101"><stop offset=".000" stop-color="#00199e"/><stop offset=".208" stop-color="#00039e"/><stop offset=".271" stop-color="#1f009e"/><stop offset=".371" stop-color="#5f0097"/><stop offset=".439" stop-color="#830083"/><stop offset=".507" stop-color="#940066"/><stop offset=".602" stop-color="#9c0045"/><stop offset=".706" stop-color="#9e002d"/><stop offset=".837" stop-color="#9e001a"/><stop offset="1.000" stop-color="#9e000d"/></linearGradient><linearGradient id="o102"><stop offset=".000" stop-color="#00179e"/><stop offset=".208" stop-color="#01019e"/><stop offset=".276" stop-color="#23009e"/><stop offset=".371" stop-color="#5f0097"/><stop offset=".439" stop-color="#820083"/><stop offset=".507" stop-color="#940067"/><stop offset=".602" stop-color="#9c0046"/><stop offset=".706" stop-color="#9e002e"/><stop offset=".837" stop-color="#9e001b"/><stop offset="1.000" stop-color="#9e000d"/></linearGradient><linearGradient id="o103"><stop offset=".000" stop-color="#00149e"/><stop offset=".204" stop-color="#00009e"/><stop offset=".271" stop-color="#21009e"/><stop offset=".371" stop-color="#5f0097"/><stop offset=".439" stop-color="#820083"/><stop offset=".507" stop-color="#940067"/><stop offset=".602" stop-color="#9c0046"/><stop offset=".706" stop-color="#9e002e"/><stop offset=".837" stop-color="#9e001c"/><stop offset="1.000" stop-color="#9e000e"/></linearGradient><linearGradient id="o104"><stop offset=".000" stop-color="#00129e"/><stop offset=".204" stop-color="#01009e"/><stop offset=".271" stop-color="#22009e"/><stop offset=".371" stop-color="#5f0097"/><stop offset=".439" stop-color="#820083"/><stop offset=".507" stop-color="#940068"/><stop offset=".602" stop-color="#9c0047"/><stop offset=".706" stop-color="#9e002f"/><stop offset=".837" stop-color="#9e001c"/><stop offset="1.000" stop-color="#9e000e"/></linearGradient><linearGradient id="o105"><stop offset=".000" stop-color="#00109e"/><stop offset=".199" stop-color="#00009e"/><stop offset=".267" stop-color="#21009e"/><stop offset=".371" stop-color="#600097"/><stop offset=".439" stop-color="#820083"/><stop offset=".507" stop-color="#940068"/><stop offset=".606" stop-color="#9c0047"/><stop offset=".710" stop-color="#9e002f"/><stop offset="1.000" stop-color="#9e000f"/></linearGradient><linearGradient id="o106"><stop offset=".000" stop-color="#000e9e"/><stop offset=".195" stop-color="#00009e"/><stop offset=".262" stop-color="#1f009e"/><stop offset=".367" stop-color="#5d0097"/><stop offset=".439" stop-color="#820084"/><stop offset=".507" stop-color="#930069"/><stop offset=".606" stop-color="#9c0047"/><stop offset=".710" stop-color="#9e0030"/><stop offset="1.000" stop-color="#9e000f"/></linearGradient><linearGradient id="o107"><stop offset=".000" stop-color="#000c9e"/><stop offset=".195" stop-color="#01009e"/><stop offset=".267" stop-color="#23009e"/><stop offset=".367" stop-color="#5e0097"/><stop offset=".439" stop-color="#820084"/><stop offset=".507" stop-color="#930069"/><stop offset=".606" stop-color="#9c0048"/><stop offset=".710" stop-color="#9e0031"/><stop offset="1.000" stop-color="#9e0010"/></linearGradient><linearGradient id="o108"><stop offset=".000" stop-color="#000a9e"/><stop offset=".113" stop-color="#00009e"/><stop offset=".190" stop-color="#00009e"/><stop offset=".262" stop-color="#21009e"/><stop offset=".367" stop-color="#5e0097"/><stop offset=".439" stop-color="#810084"/><stop offset=".507" stop-color="#93006a"/><stop offset=".606" stop-color="#9b0049"/><stop offset=".710" stop-color="#9d0031"/><stop offset="1.000" stop-color="#9e0011"/></linearGradient><linearGradient id="o109"><stop offset=".000" stop-color="#00089e"/><stop offset=".095" stop-color="#00009e"/><stop offset=".190" stop-color="#01009e"/><stop offset=".262" stop-color="#22009e"/><stop offset=".367" stop-color="#5e0097"/><stop offset=".439" stop-color="#810084"/><stop offset=".507" stop-color="#93006a"/><stop offset=".606" stop-color="#9b004a"/><stop offset=".710" stop-color="#9d0032"/><stop offset="1.000" stop-color="#9e0011"/></linearGradient><linearGradient id="o110"><stop offset=".000" stop-color="#00069e"/><stop offset=".186" stop-color="#01009e"/><stop offset=".258" stop-color="#21009e"/><stop offset=".367" stop-color="#5e0097"/><stop offset=".439" stop-color="#810084"/><stop offset=".511" stop-color="#930069"/><stop offset=".611" stop-color="#9b0049"/><stop offset=".715" stop-color="#9d0032"/><stop offset="1.000" stop-color="#9e0012"/></linearGradient><linearGradient id="o111"><stop offset=".000" stop-color="#00059e"/><stop offset=".181" stop-color="#00009e"/><stop offset=".258" stop-color="#22009e"/><stop offset=".367" stop-color="#5f0097"/><stop offset=".439" stop-color="#810084"/><stop offset=".511" stop-color="#93006a"/><stop offset=".611" stop-color="#9b004a"/><stop offset=".715" stop-color="#9d0033"/><stop offset="1.000" stop-color="#9e0012"/></linearGradient><linearGradient id="i0"><stop offset=".000" stop-color="#00ff29"/><stop offset=".313" stop-color="#0f0"/><stop offset=".507" stop-color="#7fff00"/><stop offset=".667" stop-color="#fcff00"/><stop offset=".740" stop-color="#fc0"/><stop offset=".813" stop-color="#ffa600"/><stop offset=".900" stop-color="#ff8400"/><stop offset="1.000" stop-color="#ff6800"/></linearGradient><linearGradient id="i1"><stop offset=".000" stop-color="#00ff2b"/><stop offset=".313" stop-color="#01ff00"/><stop offset=".507" stop-color="#82ff00"/><stop offset=".660" stop-color="#fbff00"/><stop offset=".740" stop-color="#ffc800"/><stop offset=".807" stop-color="#ffa600"/><stop offset=".893" stop-color="#ff8400"/><stop offset="1.000" stop-color="#f60"/></linearGradient><linearGradient id="i2"><stop offset=".000" stop-color="#00ff2d"/><stop offset=".307" stop-color="#00ff03"/><stop offset=".500" stop-color="#80ff00"/><stop offset=".653" stop-color="#faff00"/><stop offset=".660" stop-color="#fffe00"/><stop offset=".733" stop-color="#ffc800"/><stop offset=".807" stop-color="#ffa200"/><stop offset=".893" stop-color="#ff8100"/><stop offset="1.000" stop-color="#ff6400"/></linearGradient><linearGradient id="i3"><stop offset=".000" stop-color="#00ff2f"/><stop offset=".307" stop-color="#00ff05"/><stop offset=".333" stop-color="#12ff00"/><stop offset=".500" stop-color="#84ff00"/><stop offset=".653" stop-color="#fffe00"/><stop offset=".720" stop-color="#fc0"/><stop offset=".800" stop-color="#ffa200"/><stop offset=".893" stop-color="#ff7f00"/><stop offset="1.000" stop-color="#ff6100"/></linearGradient><linearGradient id="i4"><stop offset=".000" stop-color="#00ff31"/><stop offset=".307" stop-color="#02ff07"/><stop offset=".347" stop-color="#1dff00"/><stop offset=".493" stop-color="#82ff00"/><stop offset=".647" stop-color="#ff0"/><stop offset=".713" stop-color="#fc0"/><stop offset=".793" stop-color="#ffa200"/><stop offset=".887" stop-color="#ff7e00"/><stop offset="1.000" stop-color="#ff5f00"/></linearGradient><linearGradient id="i5"><stop offset=".000" stop-color="#00ff34"/><stop offset=".300" stop-color="#00ff0b"/><stop offset=".360" stop-color="#28ff00"/><stop offset=".493" stop-color="#86ff00"/><stop offset=".640" stop-color="#ff0"/><stop offset=".707" stop-color="#fc0"/><stop offset=".787" stop-color="#ffa100"/><stop offset=".887" stop-color="#ff7b00"/><stop offset="1.000" stop-color="#ff5d00"/></linearGradient><linearGradient id="i6"><stop offset=".000" stop-color="#00ff36"/><stop offset=".300" stop-color="#02ff0d"/><stop offset=".373" stop-color="#3f0"/><stop offset=".487" stop-color="#84ff00"/><stop offset=".633" stop-color="#feff00"/><stop offset=".707" stop-color="#ffc800"/><stop offset=".787" stop-color="#ff9e00"/><stop offset=".887" stop-color="#ff7900"/><stop offset="1.000" stop-color="#ff5b00"/></linearGradient><linearGradient id="i7"><stop offset=".000" stop-color="#00ff38"/><stop offset=".293" stop-color="#0f1"/><stop offset=".387" stop-color="#3fff00"/><stop offset=".513" stop-color="#9cff00"/><stop offset=".627" stop-color="#fdff00"/><stop offset=".700" stop-color="#ffc800"/><stop offset=".780" stop-color="#ff9d00"/><stop offset=".880" stop-color="#ff7800"/><stop offset="1.000" stop-color="#ff5900"/></linearGradient><linearGradient id="i8"><stop offset=".000" stop-color="#00ff3a"/><stop offset=".293" stop-color="#01ff13"/><stop offset=".400" stop-color="#4bff00"/><stop offset=".513" stop-color="#a0ff00"/><stop offset=".620" stop-color="#fdff00"/><stop offset=".700" stop-color="#ffc400"/><stop offset=".780" stop-color="#ff9a00"/><stop offset=".880" stop-color="#ff7500"/><stop offset="1.000" stop-color="#ff5700"/></linearGradient><linearGradient id="i9"><stop offset=".000" stop-color="#00ff3d"/><stop offset=".287" stop-color="#00ff17"/><stop offset=".407" stop-color="#52ff00"/><stop offset=".513" stop-color="#a4ff00"/><stop offset=".613" stop-color="#fcff00"/><stop offset=".693" stop-color="#ffc400"/><stop offset=".773" stop-color="#ff9a00"/><stop offset=".873" stop-color="#ff7500"/><stop offset="1.000" stop-color="#f50"/></linearGradient><linearGradient id="i10"><stop offset=".000" stop-color="#00ff3f"/><stop offset=".287" stop-color="#00ff19"/><stop offset=".420" stop-color="#5fff00"/><stop offset=".520" stop-color="#aeff00"/><stop offset=".607" stop-color="#fcff00"/><stop offset=".687" stop-color="#ffc400"/><stop offset=".773" stop-color="#ff9600"/><stop offset=".873" stop-color="#ff7200"/><stop offset="1.000" stop-color="#ff5300"/></linearGradient><linearGradient id="i11"><stop offset=".000" stop-color="#00ff42"/><stop offset=".287" stop-color="#02ff1c"/><stop offset=".433" stop-color="#6cff00"/><stop offset=".600" stop-color="#fbff00"/><stop offset=".680" stop-color="#ffc400"/><stop offset=".767" stop-color="#ff9600"/><stop offset=".873" stop-color="#ff7000"/><stop offset="1.000" stop-color="#ff5000"/></linearGradient><linearGradient id="i12"><stop offset=".000" stop-color="#0f4"/><stop offset=".280" stop-color="#00ff1f"/><stop offset=".447" stop-color="#7aff00"/><stop offset=".593" stop-color="#faff00"/><stop offset=".600" stop-color="#fffd00"/><stop offset=".680" stop-color="#ffbf00"/><stop offset=".760" stop-color="#ff9500"/><stop offset=".867" stop-color="#ff6f00"/><stop offset="1.000" stop-color="#ff4e00"/></linearGradient><linearGradient id="i13"><stop offset=".000" stop-color="#00ff47"/><stop offset=".280" stop-color="#01ff22"/><stop offset=".460" stop-color="#89ff00"/><stop offset=".587" stop-color="#faff00"/><stop offset=".593" stop-color="#fffe00"/><stop offset=".673" stop-color="#ffbf00"/><stop offset=".760" stop-color="#ff9200"/><stop offset=".867" stop-color="#ff6c00"/><stop offset="1.000" stop-color="#ff4c00"/></linearGradient><linearGradient id="i14"><stop offset=".000" stop-color="#00ff49"/><stop offset=".273" stop-color="#00ff26"/><stop offset=".473" stop-color="#98ff00"/><stop offset=".587" stop-color="#fffe00"/><stop offset=".660" stop-color="#ffc300"/><stop offset=".753" stop-color="#ff9200"/><stop offset=".867" stop-color="#ff6a00"/><stop offset="1.000" stop-color="#ff4a00"/></linearGradient><linearGradient id="i15"><stop offset=".000" stop-color="#00ff4c"/><stop offset=".273" stop-color="#00ff28"/><stop offset=".487" stop-color="#a7ff00"/><stop offset=".580" stop-color="#ff0"/><stop offset=".653" stop-color="#ffc300"/><stop offset=".747" stop-color="#ff9100"/><stop offset=".860" stop-color="#ff6900"/><stop offset="1.000" stop-color="#ff4800"/></linearGradient><linearGradient id="i16"><stop offset=".000" stop-color="#00ff4e"/><stop offset=".273" stop-color="#03ff2b"/><stop offset=".440" stop-color="#84ff0d"/><stop offset=".500" stop-color="#b8ff00"/><stop offset=".573" stop-color="#feff00"/><stop offset=".647" stop-color="#ffc300"/><stop offset=".740" stop-color="#ff9100"/><stop offset=".853" stop-color="#ff6800"/><stop offset="1.000" stop-color="#ff4600"/></linearGradient><linearGradient id="i17"><stop offset=".000" stop-color="#00ff51"/><stop offset=".267" stop-color="#00ff2f"/><stop offset=".433" stop-color="#82ff12"/><stop offset=".507" stop-color="#c3ff01"/><stop offset=".567" stop-color="#feff00"/><stop offset=".647" stop-color="#ffbe00"/><stop offset=".740" stop-color="#ff8d00"/><stop offset=".853" stop-color="#f60"/><stop offset="1.000" stop-color="#f40"/></linearGradient><linearGradient id="i18"><stop offset=".000" stop-color="#00ff54"/><stop offset=".267" stop-color="#02ff32"/><stop offset=".420" stop-color="#7aff17"/><stop offset=".520" stop-color="#d5ff01"/><stop offset=".560" stop-color="#fdff00"/><stop offset=".567" stop-color="#fffa00"/><stop offset=".647" stop-color="#ffba00"/><stop offset=".740" stop-color="#ff8a00"/><stop offset=".853" stop-color="#ff6300"/><stop offset="1.000" stop-color="#ff4200"/></linearGradient><linearGradient id="i19"><stop offset=".000" stop-color="#00ff57"/><stop offset=".260" stop-color="#00ff36"/><stop offset=".413" stop-color="#79ff1c"/><stop offset=".533" stop-color="#e8ff00"/><stop offset=".560" stop-color="#fffb00"/><stop offset=".640" stop-color="#ffba00"/><stop offset=".733" stop-color="#ff8900"/><stop offset=".853" stop-color="#ff6100"/><stop offset="1.000" stop-color="#ff4000"/></linearGradient><linearGradient id="i20"><stop offset=".000" stop-color="#00ff5a"/><stop offset=".260" stop-color="#01ff39"/><stop offset=".413" stop-color="#7cff1f"/><stop offset=".553" stop-color="#fffb00"/><stop offset=".633" stop-color="#ffba00"/><stop offset=".727" stop-color="#ff8900"/><stop offset=".847" stop-color="#ff6000"/><stop offset="1.000" stop-color="#ff3e00"/></linearGradient><linearGradient id="i21"><stop offset=".000" stop-color="#00ff5d"/><stop offset=".253" stop-color="#00ff3d"/><stop offset=".400" stop-color="#75ff25"/><stop offset=".547" stop-color="#fffc04"/><stop offset=".627" stop-color="#ffb900"/><stop offset=".720" stop-color="#f80"/><stop offset=".847" stop-color="#ff5d00"/><stop offset="1.000" stop-color="#ff3c00"/></linearGradient><linearGradient id="i22"><stop offset=".000" stop-color="#00ff60"/><stop offset=".253" stop-color="#00ff41"/><stop offset=".407" stop-color="#7fff27"/><stop offset=".540" stop-color="#fffc09"/><stop offset=".573" stop-color="#ffdc00"/><stop offset=".620" stop-color="#ffb900"/><stop offset=".720" stop-color="#ff8500"/><stop offset=".847" stop-color="#ff5b00"/><stop offset="1.000" stop-color="#ff3b00"/></linearGradient><linearGradient id="i23"><stop offset=".000" stop-color="#00ff63"/><stop offset=".253" stop-color="#02ff44"/><stop offset=".407" stop-color="#83ff2a"/><stop offset=".533" stop-color="#fffd0e"/><stop offset=".587" stop-color="#fc0"/><stop offset=".613" stop-color="#ffb900"/><stop offset=".713" stop-color="#ff8400"/><stop offset=".840" stop-color="#ff5a00"/><stop offset="1.000" stop-color="#ff3900"/></linearGradient><linearGradient id="i24"><stop offset=".000" stop-color="#0f6"/><stop offset=".247" stop-color="#00ff48"/><stop offset=".400" stop-color="#81ff2f"/><stop offset=".527" stop-color="#fffe14"/><stop offset=".567" stop-color="#ffd708"/><stop offset=".607" stop-color="#ffb900"/><stop offset=".707" stop-color="#ff8300"/><stop offset=".833" stop-color="#ff5900"/><stop offset="1.000" stop-color="#ff3700"/></linearGradient><linearGradient id="i25"><stop offset=".000" stop-color="#00ff69"/><stop offset=".247" stop-color="#01ff4c"/><stop offset=".400" stop-color="#85ff33"/><stop offset=".520" stop-color="#fffe19"/><stop offset=".560" stop-color="#ffd70d"/><stop offset=".600" stop-color="#ffb902"/><stop offset=".700" stop-color="#ff8300"/><stop offset=".833" stop-color="#ff5700"/><stop offset="1.000" stop-color="#ff3500"/></linearGradient><linearGradient id="i26"><stop offset=".000" stop-color="#00ff6c"/><stop offset=".240" stop-color="#00ff50"/><stop offset=".387" stop-color="#7dff39"/><stop offset=".513" stop-color="#ffff1f"/><stop offset=".553" stop-color="#ffd711"/><stop offset=".593" stop-color="#ffb807"/><stop offset=".627" stop-color="#ffa300"/><stop offset=".700" stop-color="#ff7f00"/><stop offset=".833" stop-color="#ff5400"/><stop offset="1.000" stop-color="#f30"/></linearGradient><linearGradient id="i27"><stop offset=".000" stop-color="#00ff70"/><stop offset=".240" stop-color="#00ff54"/><stop offset=".393" stop-color="#87ff3b"/><stop offset=".507" stop-color="#feff24"/><stop offset=".547" stop-color="#ffd716"/><stop offset=".587" stop-color="#ffb80b"/><stop offset=".633" stop-color="#ff9b00"/><stop offset=".693" stop-color="#ff7f00"/><stop offset=".827" stop-color="#ff5300"/><stop offset="1.000" stop-color="#ff3100"/></linearGradient><linearGradient id="i28"><stop offset=".000" stop-color="#00ff73"/><stop offset=".240" stop-color="#03ff58"/><stop offset=".387" stop-color="#86ff41"/><stop offset=".500" stop-color="#fdff2a"/><stop offset=".547" stop-color="#ffd219"/><stop offset=".587" stop-color="#ffb30e"/><stop offset=".647" stop-color="#ff9000"/><stop offset=".687" stop-color="#ff7e00"/><stop offset=".820" stop-color="#ff5300"/><stop offset="1.000" stop-color="#ff2f00"/></linearGradient><linearGradient id="i29"><stop offset=".000" stop-color="#0f7"/><stop offset=".233" stop-color="#00ff5c"/><stop offset=".367" stop-color="#77ff48"/><stop offset=".493" stop-color="#fdff2f"/><stop offset=".500" stop-color="#fffa2d"/><stop offset=".540" stop-color="#ffd21e"/><stop offset=".580" stop-color="#ffb312"/><stop offset=".660" stop-color="#ff8600"/><stop offset=".687" stop-color="#ff7a00"/><stop offset=".820" stop-color="#ff5000"/><stop offset="1.000" stop-color="#ff2d00"/></linearGradient><linearGradient id="i30"><stop offset=".000" stop-color="#00ff7a"/><stop offset=".233" stop-color="#02ff60"/><stop offset=".367" stop-color="#7bff4c"/><stop offset=".487" stop-color="#fcff35"/><stop offset=".493" stop-color="#fffa33"/><stop offset=".533" stop-color="#ffd223"/><stop offset=".573" stop-color="#ffb316"/><stop offset=".680" stop-color="#ff7a00"/><stop offset=".820" stop-color="#ff4e00"/><stop offset="1.000" stop-color="#ff2b00"/></linearGradient><linearGradient id="i31"><stop offset=".000" stop-color="#00ff7e"/><stop offset=".227" stop-color="#00ff65"/><stop offset=".360" stop-color="#79ff52"/><stop offset=".487" stop-color="#fffb39"/><stop offset=".527" stop-color="#ffd228"/><stop offset=".567" stop-color="#ffb21b"/><stop offset=".673" stop-color="#ff7902"/><stop offset=".813" stop-color="#ff4d00"/><stop offset="1.000" stop-color="#ff2a00"/></linearGradient><linearGradient id="i32"><stop offset=".000" stop-color="#00ff82"/><stop offset=".227" stop-color="#01ff69"/><stop offset=".360" stop-color="#7dff56"/><stop offset=".480" stop-color="#fffc3f"/><stop offset=".520" stop-color="#ffd22d"/><stop offset=".567" stop-color="#ffad1d"/><stop offset=".673" stop-color="#ff7605"/><stop offset=".813" stop-color="#ff4a00"/><stop offset="1.000" stop-color="#ff2800"/></linearGradient><linearGradient id="i33"><stop offset=".000" stop-color="#00ff85"/><stop offset=".220" stop-color="#00ff6f"/><stop offset=".347" stop-color="#74ff5d"/><stop offset=".473" stop-color="#fffc45"/><stop offset=".513" stop-color="#ffd232"/><stop offset=".553" stop-color="#ffb224"/><stop offset=".607" stop-color="#ff9115"/><stop offset=".667" stop-color="#ff7508"/><stop offset=".713" stop-color="#ff6400"/><stop offset=".813" stop-color="#ff4800"/><stop offset="1.000" stop-color="#ff2600"/></linearGradient><linearGradient id="i34"><stop offset=".000" stop-color="#00ff89"/><stop offset=".220" stop-color="#00ff73"/><stop offset=".353" stop-color="#80ff60"/><stop offset=".467" stop-color="#fffd4c"/><stop offset=".507" stop-color="#ffd238"/><stop offset=".547" stop-color="#ffb128"/><stop offset=".600" stop-color="#ff9019"/><stop offset=".660" stop-color="#ff740b"/><stop offset=".727" stop-color="#ff5c00"/><stop offset=".807" stop-color="#ff4700"/><stop offset="1.000" stop-color="#ff2400"/></linearGradient><linearGradient id="i35"><stop offset=".000" stop-color="#00ff8d"/><stop offset=".220" stop-color="#03ff77"/><stop offset=".353" stop-color="#85ff65"/><stop offset=".460" stop-color="#fffe52"/><stop offset=".500" stop-color="#ffd23d"/><stop offset=".540" stop-color="#ffb12d"/><stop offset=".593" stop-color="#ff8f1d"/><stop offset=".653" stop-color="#ff730f"/><stop offset=".740" stop-color="#f50"/><stop offset=".860" stop-color="#ff3900"/><stop offset="1.000" stop-color="#f20"/></linearGradient><linearGradient id="i36"><stop offset=".000" stop-color="#00ff92"/><stop offset=".213" stop-color="#00ff7d"/><stop offset=".347" stop-color="#82ff6b"/><stop offset=".453" stop-color="#ffff59"/><stop offset=".493" stop-color="#ffd243"/><stop offset=".533" stop-color="#ffb132"/><stop offset=".587" stop-color="#ff8f21"/><stop offset=".647" stop-color="#ff7212"/><stop offset=".747" stop-color="#ff5100"/><stop offset=".860" stop-color="#ff3700"/><stop offset="1.000" stop-color="#ff2100"/></linearGradient><linearGradient id="i37"><stop offset=".000" stop-color="#00ff96"/><stop offset=".213" stop-color="#02ff82"/><stop offset=".347" stop-color="#87ff70"/><stop offset=".447" stop-color="#ffff60"/><stop offset=".487" stop-color="#ffd249"/><stop offset=".533" stop-color="#ffab34"/><stop offset=".587" stop-color="#ff8a23"/><stop offset=".647" stop-color="#ff6f14"/><stop offset=".760" stop-color="#ff4a00"/><stop offset="1.000" stop-color="#ff1f00"/></linearGradient><linearGradient id="i38"><stop offset=".000" stop-color="#00ff9a"/><stop offset=".207" stop-color="#00ff87"/><stop offset=".333" stop-color="#7eff78"/><stop offset=".440" stop-color="#feff67"/><stop offset=".480" stop-color="#ffd24e"/><stop offset=".527" stop-color="#ffab39"/><stop offset=".580" stop-color="#ff8a27"/><stop offset=".640" stop-color="#ff6e18"/><stop offset=".773" stop-color="#ff4500"/><stop offset="1.000" stop-color="#ff1d00"/></linearGradient><linearGradient id="i39"><stop offset=".000" stop-color="#00ff9f"/><stop offset=".207" stop-color="#00ff8c"/><stop offset=".320" stop-color="#74ff7f"/><stop offset=".433" stop-color="#fdff6e"/><stop offset=".440" stop-color="#fff86a"/><stop offset=".480" stop-color="#ffcc51"/><stop offset=".527" stop-color="#ffa63b"/><stop offset=".580" stop-color="#ff8529"/><stop offset=".640" stop-color="#ff6a1a"/><stop offset=".787" stop-color="#ff3f00"/><stop offset="1.000" stop-color="#ff1b00"/></linearGradient><linearGradient id="i40"><stop offset=".000" stop-color="#00ffa3"/><stop offset=".207" stop-color="#03ff92"/><stop offset=".320" stop-color="#79ff85"/><stop offset=".427" stop-color="#fcff75"/><stop offset=".433" stop-color="#fff971"/><stop offset=".473" stop-color="#ffcc57"/><stop offset=".520" stop-color="#ffa540"/><stop offset=".573" stop-color="#ff852d"/><stop offset=".633" stop-color="#ff691d"/><stop offset=".800" stop-color="#ff3a00"/><stop offset="1.000" stop-color="#ff1900"/></linearGradient><linearGradient id="i41"><stop offset=".000" stop-color="#00ffa8"/><stop offset=".200" stop-color="#00ff98"/><stop offset=".313" stop-color="#77ff8b"/><stop offset=".420" stop-color="#fbff7c"/><stop offset=".427" stop-color="#fffa79"/><stop offset=".467" stop-color="#ffcc5d"/><stop offset=".513" stop-color="#ffa545"/><stop offset=".567" stop-color="#ff8432"/><stop offset=".627" stop-color="#ff6921"/><stop offset=".713" stop-color="#ff4c0f"/><stop offset=".813" stop-color="#ff3400"/><stop offset="1.000" stop-color="#ff1800"/></linearGradient><linearGradient id="i42"><stop offset=".000" stop-color="#00ffad"/><stop offset=".200" stop-color="#02ff9d"/><stop offset=".313" stop-color="#7cff91"/><stop offset=".413" stop-color="#faff84"/><stop offset=".420" stop-color="#fffa81"/><stop offset=".460" stop-color="#ffcc63"/><stop offset=".507" stop-color="#ffa44b"/><stop offset=".560" stop-color="#ff8336"/><stop offset=".620" stop-color="#ff6824"/><stop offset=".713" stop-color="#ff4911"/><stop offset=".820" stop-color="#ff3101"/><stop offset="1.000" stop-color="#ff1600"/></linearGradient><linearGradient id="i43"><stop offset=".000" stop-color="#00ffb2"/><stop offset=".193" stop-color="#00ffa4"/><stop offset=".307" stop-color="#79ff98"/><stop offset=".413" stop-color="#fffb89"/><stop offset=".453" stop-color="#ffcc6a"/><stop offset=".500" stop-color="#ffa450"/><stop offset=".553" stop-color="#ff823a"/><stop offset=".613" stop-color="#ff6728"/><stop offset=".713" stop-color="#ff4613"/><stop offset=".833" stop-color="#ff2c00"/><stop offset="1.000" stop-color="#ff1400"/></linearGradient><linearGradient id="i44"><stop offset=".000" stop-color="#00ffb7"/><stop offset=".193" stop-color="#01ffaa"/><stop offset=".307" stop-color="#7eff9f"/><stop offset=".407" stop-color="#fffc91"/><stop offset=".447" stop-color="#ffcc71"/><stop offset=".493" stop-color="#ffa355"/><stop offset=".547" stop-color="#ff813f"/><stop offset=".607" stop-color="#ff662c"/><stop offset=".713" stop-color="#ff4314"/><stop offset=".847" stop-color="#ff2800"/><stop offset="1.000" stop-color="#ff1200"/></linearGradient><linearGradient id="i45"><stop offset=".000" stop-color="#00ffbd"/><stop offset=".187" stop-color="#00ffb0"/><stop offset=".293" stop-color="#74ffa7"/><stop offset=".400" stop-color="#fffd9a"/><stop offset=".440" stop-color="#fc7"/><stop offset=".487" stop-color="#ffa35b"/><stop offset=".540" stop-color="#ff8143"/><stop offset=".607" stop-color="#ff622e"/><stop offset=".720" stop-color="#ff3f15"/><stop offset=".860" stop-color="#ff2300"/><stop offset="1.000" stop-color="#f10"/></linearGradient><linearGradient id="i46"><stop offset=".000" stop-color="#00ffc2"/><stop offset=".187" stop-color="#00ffb7"/><stop offset=".300" stop-color="#81ffad"/><stop offset=".393" stop-color="#fffea3"/><stop offset=".433" stop-color="#ffcc7f"/><stop offset=".480" stop-color="#ffa260"/><stop offset=".533" stop-color="#ff8048"/><stop offset=".600" stop-color="#ff6131"/><stop offset=".720" stop-color="#ff3c16"/><stop offset=".873" stop-color="#ff1f00"/><stop offset="1.000" stop-color="#ff0f00"/></linearGradient><linearGradient id="i47"><stop offset=".000" stop-color="#00ffc8"/><stop offset=".187" stop-color="#03ffbd"/><stop offset=".300" stop-color="#87ffb5"/><stop offset=".387" stop-color="#ffffac"/><stop offset=".427" stop-color="#ffcc86"/><stop offset=".473" stop-color="#ffa166"/><stop offset=".527" stop-color="#ff7f4c"/><stop offset=".593" stop-color="#ff6035"/><stop offset=".700" stop-color="#ff3e1c"/><stop offset=".833" stop-color="#ff2307"/><stop offset=".887" stop-color="#ff1b00"/><stop offset="1.000" stop-color="#ff0d00"/></linearGradient><linearGradient id="i48"><stop offset=".000" stop-color="#00ffce"/><stop offset=".180" stop-color="#00ffc4"/><stop offset=".287" stop-color="#7cffbd"/><stop offset=".380" stop-color="#feffb5"/><stop offset=".420" stop-color="#ffcc8d"/><stop offset=".467" stop-color="#ffa16c"/><stop offset=".520" stop-color="#ff7e51"/><stop offset=".587" stop-color="#ff5f39"/><stop offset=".687" stop-color="#ff3f20"/><stop offset=".813" stop-color="#ff250b"/><stop offset=".900" stop-color="#ff1700"/><stop offset="1.000" stop-color="#ff0c00"/></linearGradient><linearGradient id="i49"><stop offset=".000" stop-color="#00ffd4"/><stop offset=".180" stop-color="#02ffcc"/><stop offset=".287" stop-color="#82ffc5"/><stop offset=".373" stop-color="#fdffbe"/><stop offset=".413" stop-color="#ffcc95"/><stop offset=".460" stop-color="#ffa072"/><stop offset=".513" stop-color="#ff7d56"/><stop offset=".580" stop-color="#ff5e3d"/><stop offset=".673" stop-color="#ff4024"/><stop offset=".793" stop-color="#ff260f"/><stop offset=".913" stop-color="#ff1400"/><stop offset="1.000" stop-color="#ff0a00"/></linearGradient><linearGradient id="i50"><stop offset=".000" stop-color="#00ffda"/><stop offset=".173" stop-color="#00ffd3"/><stop offset=".267" stop-color="#6effce"/><stop offset=".367" stop-color="#fcffc8"/><stop offset=".373" stop-color="#fff7c1"/><stop offset=".413" stop-color="#ffc497"/><stop offset=".460" stop-color="#ff9a74"/><stop offset=".513" stop-color="#ff7858"/><stop offset=".580" stop-color="#ff5a3e"/><stop offset=".673" stop-color="#ff3d26"/><stop offset=".787" stop-color="#ff2512"/><stop offset=".927" stop-color="#ff1000"/><stop offset="1.000" stop-color="#ff0800"/></linearGradient><linearGradient id="i51"><stop offset=".000" stop-color="#00ffe0"/><stop offset=".173" stop-color="#01ffdb"/><stop offset=".267" stop-color="#74ffd7"/><stop offset=".360" stop-color="#fbffd2"/><stop offset=".367" stop-color="#fff8cb"/><stop offset=".407" stop-color="#ffc49f"/><stop offset=".453" stop-color="#ff9a7a"/><stop offset=".507" stop-color="#ff775d"/><stop offset=".573" stop-color="#ff5942"/><stop offset=".667" stop-color="#ff3b29"/><stop offset=".773" stop-color="#ff2515"/><stop offset=".933" stop-color="#ff0e00"/><stop offset="1.000" stop-color="#ff0600"/></linearGradient><linearGradient id="i52"><stop offset=".000" stop-color="#00ffe7"/><stop offset=".173" stop-color="#04ffe3"/><stop offset=".267" stop-color="#79ffdf"/><stop offset=".353" stop-color="#faffdc"/><stop offset=".360" stop-color="#fff9d6"/><stop offset=".400" stop-color="#ffc4a7"/><stop offset=".447" stop-color="#ff9981"/><stop offset=".500" stop-color="#ff7662"/><stop offset=".567" stop-color="#ff5846"/><stop offset=".653" stop-color="#ff3c2e"/><stop offset=".760" stop-color="#ff2519"/><stop offset=".947" stop-color="#ff0a00"/><stop offset="1.000" stop-color="#ff0500"/></linearGradient><linearGradient id="i53"><stop offset=".000" stop-color="#0fe"/><stop offset=".167" stop-color="#00ffeb"/><stop offset=".260" stop-color="#76ffe9"/><stop offset=".347" stop-color="#f9ffe6"/><stop offset=".353" stop-color="#fffae1"/><stop offset=".393" stop-color="#ffc4af"/><stop offset=".440" stop-color="#ff9887"/><stop offset=".493" stop-color="#ff7567"/><stop offset=".560" stop-color="#ff564a"/><stop offset=".647" stop-color="#ff3b31"/><stop offset=".753" stop-color="#ff231b"/><stop offset=".927" stop-color="#ff0b04"/><stop offset="1.000" stop-color="#ff0300"/></linearGradient><linearGradient id="i54"><stop offset=".000" stop-color="#00fff5"/><stop offset=".167" stop-color="#03fff3"/><stop offset=".260" stop-color="#7dfff2"/><stop offset=".347" stop-color="#fffbed"/><stop offset=".387" stop-color="#ffc4b8"/><stop offset=".433" stop-color="#ff978e"/><stop offset=".487" stop-color="#ff746c"/><stop offset=".553" stop-color="#ff554f"/><stop offset=".640" stop-color="#ff3a34"/><stop offset=".740" stop-color="#ff231f"/><stop offset="1.000" stop-color="#ff0100"/></linearGradient><linearGradient id="i55"><stop offset=".000" stop-color="#00fffc"/><stop offset=".160" stop-color="#00fffc"/><stop offset=".253" stop-color="#7afffc"/><stop offset=".340" stop-color="#fffcf9"/><stop offset=".380" stop-color="#ffc3c1"/><stop offset=".427" stop-color="#ff9795"/><stop offset=".487" stop-color="#ff6f6e"/><stop offset=".553" stop-color="#ff5150"/><stop offset=".633" stop-color="#ff3837"/><stop offset=".733" stop-color="#f22"/><stop offset="1.000" stop-color="#f00"/></linearGradient><linearGradient id="i56"><stop offset=".000" stop-color="#00faff"/><stop offset=".160" stop-color="#01f9ff"/><stop offset=".253" stop-color="#7df8ff"/><stop offset=".333" stop-color="#f9f7ff"/><stop offset=".340" stop-color="#fff1f9"/><stop offset=".380" stop-color="#ffbcc2"/><stop offset=".427" stop-color="#ff9196"/><stop offset=".487" stop-color="#ff6b70"/><stop offset=".553" stop-color="#ff4e52"/><stop offset=".640" stop-color="#ff3437"/><stop offset=".747" stop-color="#ff1d21"/><stop offset="1.000" stop-color="#f00"/></linearGradient><linearGradient id="i57"><stop offset=".000" stop-color="#00f3ff"/><stop offset=".153" stop-color="#00f0ff"/><stop offset=".160" stop-color="#05f0ff"/><stop offset=".253" stop-color="#7eeeff"/><stop offset=".333" stop-color="#f8ecff"/><stop offset=".340" stop-color="#ffe7fa"/><stop offset=".380" stop-color="#ffb4c4"/><stop offset=".427" stop-color="#ff8b98"/><stop offset=".487" stop-color="#ff6671"/><stop offset=".553" stop-color="#ff4a54"/><stop offset=".640" stop-color="#ff3139"/><stop offset=".753" stop-color="#ff1a21"/><stop offset=".953" stop-color="#ff0006"/><stop offset="1.000" stop-color="#ff0001"/></linearGradient><linearGradient id="i58"><stop offset=".000" stop-color="#00ecff"/><stop offset=".153" stop-color="#00e8ff"/><stop offset=".253" stop-color="#7fe5ff"/><stop offset=".340" stop-color="#ffdefb"/><stop offset=".380" stop-color="#ffacc5"/><stop offset=".427" stop-color="#ff859a"/><stop offset=".487" stop-color="#ff6173"/><stop offset=".553" stop-color="#ff4655"/><stop offset=".647" stop-color="#ff2c39"/><stop offset=".760" stop-color="#ff1721"/><stop offset=".933" stop-color="#ff0009"/><stop offset="1.000" stop-color="#ff0003"/></linearGradient><linearGradient id="i59"><stop offset=".000" stop-color="#00e5ff"/><stop offset=".153" stop-color="#03e0ff"/><stop offset=".253" stop-color="#81dcff"/><stop offset=".340" stop-color="#ffd4fc"/><stop offset=".380" stop-color="#ffa5c6"/><stop offset=".427" stop-color="#ff7f9b"/><stop offset=".487" stop-color="#ff5d75"/><stop offset=".553" stop-color="#ff4357"/><stop offset=".653" stop-color="#ff2838"/><stop offset=".773" stop-color="#ff1220"/><stop offset=".920" stop-color="#ff000c"/><stop offset="1.000" stop-color="#ff0004"/></linearGradient><linearGradient id="i60"><stop offset=".000" stop-color="#00deff"/><stop offset=".147" stop-color="#00d8ff"/><stop offset=".247" stop-color="#79d3ff"/><stop offset=".340" stop-color="#ffcbfd"/><stop offset=".380" stop-color="#ff9ec8"/><stop offset=".427" stop-color="#ff799d"/><stop offset=".487" stop-color="#ff5976"/><stop offset=".553" stop-color="#ff3f58"/><stop offset=".653" stop-color="#ff253a"/><stop offset=".780" stop-color="#ff0f20"/><stop offset=".900" stop-color="#ff0010"/><stop offset="1.000" stop-color="#ff0005"/></linearGradient><linearGradient id="i61"><stop offset=".000" stop-color="#00d7ff"/><stop offset=".147" stop-color="#02d0ff"/><stop offset=".253" stop-color="#83caff"/><stop offset=".340" stop-color="#ffc2fe"/><stop offset=".380" stop-color="#ff97c9"/><stop offset=".427" stop-color="#ff749e"/><stop offset=".487" stop-color="#ff5478"/><stop offset=".553" stop-color="#ff3c5a"/><stop offset=".660" stop-color="#ff213a"/><stop offset=".800" stop-color="#ff0a1f"/><stop offset=".880" stop-color="#ff0013"/><stop offset="1.000" stop-color="#ff0006"/></linearGradient><linearGradient id="i62"><stop offset=".000" stop-color="#00d1ff"/><stop offset=".140" stop-color="#00c9ff"/><stop offset=".247" stop-color="#7cc2ff"/><stop offset=".340" stop-color="#ffb9fe"/><stop offset=".380" stop-color="#ff90ca"/><stop offset=".427" stop-color="#ff6ea0"/><stop offset=".487" stop-color="#ff5079"/><stop offset=".553" stop-color="#ff385b"/><stop offset=".673" stop-color="#ff1c38"/><stop offset=".820" stop-color="#ff051d"/><stop offset="1.000" stop-color="#ff0007"/></linearGradient><linearGradient id="i63"><stop offset=".000" stop-color="#00caff"/><stop offset=".140" stop-color="#00c2ff"/><stop offset=".253" stop-color="#86b9ff"/><stop offset=".340" stop-color="#ffb1ff"/><stop offset=".380" stop-color="#ff8acc"/><stop offset=".427" stop-color="#ff69a1"/><stop offset=".487" stop-color="#ff4c7b"/><stop offset=".553" stop-color="#ff355d"/><stop offset=".680" stop-color="#ff1838"/><stop offset=".840" stop-color="#ff011b"/><stop offset="1.000" stop-color="#ff0008"/></linearGradient><linearGradient id="i64"><stop offset=".000" stop-color="#00c4ff"/><stop offset=".140" stop-color="#04bbff"/><stop offset=".253" stop-color="#87b1ff"/><stop offset=".340" stop-color="#fea8ff"/><stop offset=".387" stop-color="#ff7ec6"/><stop offset=".433" stop-color="#ff609e"/><stop offset=".493" stop-color="#ff4579"/><stop offset=".560" stop-color="#ff2f5c"/><stop offset=".680" stop-color="#ff1539"/><stop offset=".827" stop-color="#ff001e"/><stop offset="1.000" stop-color="#ff0009"/></linearGradient><linearGradient id="i65"><stop offset=".000" stop-color="#00beff"/><stop offset=".133" stop-color="#00b4ff"/><stop offset=".247" stop-color="#80aaff"/><stop offset=".340" stop-color="#fea0ff"/><stop offset=".387" stop-color="#ff78c7"/><stop offset=".433" stop-color="#ff5b9f"/><stop offset=".493" stop-color="#ff417a"/><stop offset=".560" stop-color="#ff2c5d"/><stop offset=".667" stop-color="#ff153e"/><stop offset=".807" stop-color="#f02"/><stop offset="1.000" stop-color="#ff000a"/></linearGradient><linearGradient id="i66"><stop offset=".000" stop-color="#00b8ff"/><stop offset=".133" stop-color="#02aeff"/><stop offset=".233" stop-color="#71a4ff"/><stop offset=".340" stop-color="#fd97ff"/><stop offset=".347" stop-color="#ff92f8"/><stop offset=".387" stop-color="#ff72c8"/><stop offset=".440" stop-color="#ff539c"/><stop offset=".500" stop-color="#ff3a78"/><stop offset=".567" stop-color="#ff275c"/><stop offset=".667" stop-color="#ff123f"/><stop offset=".787" stop-color="#ff0127"/><stop offset="1.000" stop-color="#ff000c"/></linearGradient><linearGradient id="i67"><stop offset=".000" stop-color="#00b2ff"/><stop offset=".127" stop-color="#00a8ff"/><stop offset=".233" stop-color="#739dff"/><stop offset=".340" stop-color="#fc8fff"/><stop offset=".347" stop-color="#ff8bf8"/><stop offset=".387" stop-color="#ff6cc9"/><stop offset=".440" stop-color="#ff4e9d"/><stop offset=".500" stop-color="#ff377a"/><stop offset=".567" stop-color="#ff245e"/><stop offset=".660" stop-color="#ff1142"/><stop offset=".773" stop-color="#ff002a"/><stop offset="1.000" stop-color="#ff000d"/></linearGradient><linearGradient id="i68"><stop offset=".000" stop-color="#00acff"/><stop offset=".127" stop-color="#01a1ff"/><stop offset=".233" stop-color="#7496ff"/><stop offset=".340" stop-color="#fc88ff"/><stop offset=".347" stop-color="#ff83f9"/><stop offset=".387" stop-color="#ff66ca"/><stop offset=".440" stop-color="#ff499e"/><stop offset=".500" stop-color="#ff337b"/><stop offset=".567" stop-color="#ff215f"/><stop offset=".653" stop-color="#ff0f45"/><stop offset=".753" stop-color="#ff002f"/><stop offset="1.000" stop-color="#ff000e"/></linearGradient><linearGradient id="i69"><stop offset=".000" stop-color="#00a6ff"/><stop offset=".127" stop-color="#049bff"/><stop offset=".240" stop-color="#7d8eff"/><stop offset=".340" stop-color="#fb80ff"/><stop offset=".347" stop-color="#ff7cfa"/><stop offset=".387" stop-color="#ff60cc"/><stop offset=".440" stop-color="#ff45a0"/><stop offset=".500" stop-color="#ff2f7d"/><stop offset=".567" stop-color="#ff1d60"/><stop offset=".733" stop-color="#ff0034"/><stop offset="1.000" stop-color="#ff000f"/></linearGradient><linearGradient id="i70"><stop offset=".000" stop-color="#00a1ff"/><stop offset=".120" stop-color="#0096ff"/><stop offset=".233" stop-color="#78f"/><stop offset=".340" stop-color="#fa79ff"/><stop offset=".347" stop-color="#ff75fa"/><stop offset=".387" stop-color="#ff5acd"/><stop offset=".440" stop-color="#ff40a1"/><stop offset=".500" stop-color="#ff2b7e"/><stop offset=".567" stop-color="#ff1a62"/><stop offset=".720" stop-color="#ff0038"/><stop offset="1.000" stop-color="#ff0010"/></linearGradient><linearGradient id="i71"><stop offset=".000" stop-color="#009bff"/><stop offset=".120" stop-color="#0390ff"/><stop offset=".240" stop-color="#7f81ff"/><stop offset=".347" stop-color="#ff6ffb"/><stop offset=".387" stop-color="#ff55ce"/><stop offset=".440" stop-color="#ff3ca2"/><stop offset=".500" stop-color="#ff287f"/><stop offset=".567" stop-color="#ff1763"/><stop offset=".700" stop-color="#ff003e"/><stop offset=".833" stop-color="#ff0025"/><stop offset="1.000" stop-color="#f01"/></linearGradient><linearGradient id="i72"><stop offset=".000" stop-color="#0096ff"/><stop offset=".113" stop-color="#008bff"/><stop offset=".233" stop-color="#797cff"/><stop offset=".347" stop-color="#ff68fc"/><stop offset=".387" stop-color="#ff4fcf"/><stop offset=".440" stop-color="#ff37a3"/><stop offset=".500" stop-color="#ff2481"/><stop offset=".567" stop-color="#ff1464"/><stop offset=".680" stop-color="#ff0043"/><stop offset=".820" stop-color="#ff0029"/><stop offset="1.000" stop-color="#ff0012"/></linearGradient><linearGradient id="i73"><stop offset=".000" stop-color="#0091ff"/><stop offset=".113" stop-color="#0285ff"/><stop offset=".240" stop-color="#8274ff"/><stop offset=".347" stop-color="#ff62fc"/><stop offset=".387" stop-color="#ff4ad0"/><stop offset=".440" stop-color="#ff33a5"/><stop offset=".500" stop-color="#ff2082"/><stop offset=".573" stop-color="#ff1063"/><stop offset=".667" stop-color="#ff0048"/><stop offset=".753" stop-color="#ff0035"/><stop offset="1.000" stop-color="#ff0013"/></linearGradient><linearGradient id="i74"><stop offset=".000" stop-color="#008cff"/><stop offset=".107" stop-color="#0080ff"/><stop offset=".113" stop-color="#047fff"/><stop offset=".240" stop-color="#836eff"/><stop offset=".347" stop-color="#ff5bfd"/><stop offset=".387" stop-color="#ff45d1"/><stop offset=".440" stop-color="#ff2fa6"/><stop offset=".500" stop-color="#ff1d83"/><stop offset=".573" stop-color="#ff0c65"/><stop offset=".647" stop-color="#ff004e"/><stop offset=".753" stop-color="#ff0036"/><stop offset="1.000" stop-color="#ff0014"/></linearGradient><linearGradient id="i75"><stop offset=".000" stop-color="#0086ff"/><stop offset=".107" stop-color="#007bff"/><stop offset=".240" stop-color="#8468ff"/><stop offset=".347" stop-color="#ff55fe"/><stop offset=".387" stop-color="#ff3fd2"/><stop offset=".440" stop-color="#ff2aa7"/><stop offset=".500" stop-color="#ff1985"/><stop offset=".573" stop-color="#ff0966"/><stop offset=".627" stop-color="#f05"/><stop offset=".753" stop-color="#ff0037"/><stop offset="1.000" stop-color="#ff0015"/></linearGradient><linearGradient id="i76"><stop offset=".000" stop-color="#0082ff"/><stop offset=".107" stop-color="#0375ff"/><stop offset=".240" stop-color="#8562ff"/><stop offset=".347" stop-color="#ff4ffe"/><stop offset=".387" stop-color="#ff3ad3"/><stop offset=".440" stop-color="#ff26a8"/><stop offset=".500" stop-color="#ff1586"/><stop offset=".573" stop-color="#ff0667"/><stop offset=".613" stop-color="#ff005a"/><stop offset=".753" stop-color="#ff0039"/><stop offset="1.000" stop-color="#ff0016"/></linearGradient><linearGradient id="i77"><stop offset=".000" stop-color="#007dff"/><stop offset=".100" stop-color="#0071ff"/><stop offset=".240" stop-color="#865dff"/><stop offset=".347" stop-color="#ff49ff"/><stop offset=".387" stop-color="#ff35d4"/><stop offset=".440" stop-color="#ff22a9"/><stop offset=".500" stop-color="#ff1287"/><stop offset=".573" stop-color="#ff0368"/><stop offset=".753" stop-color="#ff003a"/><stop offset="1.000" stop-color="#ff0017"/></linearGradient><linearGradient id="i78"><stop offset=".000" stop-color="#0078ff"/><stop offset=".100" stop-color="#026cff"/><stop offset=".240" stop-color="#8757ff"/><stop offset=".347" stop-color="#fe43ff"/><stop offset=".393" stop-color="#ff2ecf"/><stop offset=".440" stop-color="#ff1eab"/><stop offset=".500" stop-color="#ff0e88"/><stop offset=".573" stop-color="#ff006a"/><stop offset=".753" stop-color="#ff003b"/><stop offset="1.000" stop-color="#ff0018"/></linearGradient><linearGradient id="i79"><stop offset=".000" stop-color="#0073ff"/><stop offset=".093" stop-color="#0068ff"/><stop offset=".100" stop-color="#0567ff"/><stop offset=".240" stop-color="#8852ff"/><stop offset=".347" stop-color="#fe3dff"/><stop offset=".393" stop-color="#ff29cf"/><stop offset=".447" stop-color="#ff18a7"/><stop offset=".507" stop-color="#ff0986"/><stop offset=".573" stop-color="#ff006b"/><stop offset=".753" stop-color="#ff003c"/><stop offset="1.000" stop-color="#ff0019"/></linearGradient><linearGradient id="i80"><stop offset=".000" stop-color="#006fff"/><stop offset=".093" stop-color="#0163ff"/><stop offset=".233" stop-color="#824dff"/><stop offset=".347" stop-color="#fd37ff"/><stop offset=".393" stop-color="#ff24d0"/><stop offset=".447" stop-color="#ff14a8"/><stop offset=".533" stop-color="#ff017c"/><stop offset=".573" stop-color="#ff006c"/><stop offset=".753" stop-color="#ff003d"/><stop offset="1.000" stop-color="#ff001a"/></linearGradient><linearGradient id="i81"><stop offset=".000" stop-color="#006aff"/><stop offset=".093" stop-color="#045eff"/><stop offset=".220" stop-color="#764bff"/><stop offset=".347" stop-color="#fd32ff"/><stop offset=".353" stop-color="#ff2ff9"/><stop offset=".393" stop-color="#ff20d1"/><stop offset=".447" stop-color="#ff10aa"/><stop offset=".520" stop-color="#ff0082"/><stop offset=".580" stop-color="#ff006b"/><stop offset=".760" stop-color="#ff003d"/><stop offset="1.000" stop-color="#ff001a"/></linearGradient><linearGradient id="i82"><stop offset=".000" stop-color="#06f"/><stop offset=".087" stop-color="#005aff"/><stop offset=".220" stop-color="#7745ff"/><stop offset=".347" stop-color="#fc2cff"/><stop offset=".353" stop-color="#ff2afa"/><stop offset=".393" stop-color="#ff1bd2"/><stop offset=".447" stop-color="#ff0cab"/><stop offset=".500" stop-color="#ff008d"/><stop offset=".580" stop-color="#ff006c"/><stop offset=".760" stop-color="#ff003e"/><stop offset="1.000" stop-color="#ff001b"/></linearGradient><linearGradient id="i83"><stop offset=".000" stop-color="#0061ff"/><stop offset=".087" stop-color="#0256ff"/><stop offset=".220" stop-color="#7841ff"/><stop offset=".347" stop-color="#fc27ff"/><stop offset=".353" stop-color="#ff24fb"/><stop offset=".393" stop-color="#ff16d3"/><stop offset=".447" stop-color="#ff08ac"/><stop offset=".487" stop-color="#ff0095"/><stop offset=".580" stop-color="#ff006d"/><stop offset=".760" stop-color="#ff003f"/><stop offset="1.000" stop-color="#ff001c"/></linearGradient><linearGradient id="i84"><stop offset=".000" stop-color="#005dff"/><stop offset=".080" stop-color="#0052ff"/><stop offset=".220" stop-color="#793cff"/><stop offset=".353" stop-color="#ff1ffb"/><stop offset=".393" stop-color="#ff12d4"/><stop offset=".447" stop-color="#ff04ad"/><stop offset=".507" stop-color="#ff008c"/><stop offset=".580" stop-color="#ff006e"/><stop offset=".760" stop-color="#ff0040"/><stop offset="1.000" stop-color="#ff001d"/></linearGradient><linearGradient id="i85"><stop offset=".000" stop-color="#0059ff"/><stop offset=".080" stop-color="#014eff"/><stop offset=".227" stop-color="#8036ff"/><stop offset=".353" stop-color="#ff1afc"/><stop offset=".400" stop-color="#ff0bcf"/><stop offset=".453" stop-color="#f0a"/><stop offset=".513" stop-color="#ff008a"/><stop offset=".580" stop-color="#ff006f"/><stop offset=".760" stop-color="#ff0041"/><stop offset="1.000" stop-color="#ff001e"/></linearGradient><linearGradient id="i86"><stop offset=".000" stop-color="#0054ff"/><stop offset=".080" stop-color="#0449ff"/><stop offset=".227" stop-color="#8131ff"/><stop offset=".353" stop-color="#ff15fc"/><stop offset=".400" stop-color="#ff07d0"/><stop offset=".453" stop-color="#ff00ab"/><stop offset=".513" stop-color="#ff008b"/><stop offset=".587" stop-color="#ff006e"/><stop offset=".760" stop-color="#ff0042"/><stop offset="1.000" stop-color="#ff001f"/></linearGradient><linearGradient id="i87"><stop offset=".000" stop-color="#0050ff"/><stop offset=".073" stop-color="#0046ff"/><stop offset=".227" stop-color="#822cff"/><stop offset=".353" stop-color="#ff10fd"/><stop offset=".407" stop-color="#ff01cc"/><stop offset=".453" stop-color="#ff00ac"/><stop offset=".513" stop-color="#ff008c"/><stop offset=".587" stop-color="#ff006f"/><stop offset=".767" stop-color="#ff0042"/><stop offset="1.000" stop-color="#ff0020"/></linearGradient><linearGradient id="i88"><stop offset=".000" stop-color="#004cff"/><stop offset=".073" stop-color="#0342ff"/><stop offset=".227" stop-color="#8328ff"/><stop offset=".353" stop-color="#ff0bfd"/><stop offset=".393" stop-color="#ff00d7"/><stop offset=".453" stop-color="#ff00ad"/><stop offset=".513" stop-color="#ff008d"/><stop offset=".587" stop-color="#ff0070"/><stop offset=".767" stop-color="#ff0043"/><stop offset="1.000" stop-color="#ff0021"/></linearGradient><linearGradient id="i89"><stop offset=".000" stop-color="#0048ff"/><stop offset=".067" stop-color="#003fff"/><stop offset=".220" stop-color="#7e24ff"/><stop offset=".353" stop-color="#ff06fe"/><stop offset=".400" stop-color="#ff00d3"/><stop offset=".453" stop-color="#ff00ae"/><stop offset=".513" stop-color="#ff008e"/><stop offset=".587" stop-color="#ff0072"/><stop offset=".767" stop-color="#f04"/><stop offset="1.000" stop-color="#f02"/></linearGradient><linearGradient id="i90"><stop offset=".000" stop-color="#04f"/><stop offset=".067" stop-color="#023bff"/><stop offset=".227" stop-color="#851fff"/><stop offset=".353" stop-color="#ff01fe"/><stop offset=".400" stop-color="#ff00d3"/><stop offset=".453" stop-color="#ff00af"/><stop offset=".513" stop-color="#ff008f"/><stop offset=".587" stop-color="#ff0073"/><stop offset=".767" stop-color="#ff0045"/><stop offset="1.000" stop-color="#ff0023"/></linearGradient><linearGradient id="i91"><stop offset=".000" stop-color="#0040ff"/><stop offset=".067" stop-color="#0437ff"/><stop offset=".227" stop-color="#851aff"/><stop offset=".353" stop-color="#f0f"/><stop offset=".400" stop-color="#ff00d4"/><stop offset=".453" stop-color="#ff00b0"/><stop offset=".513" stop-color="#ff0090"/><stop offset=".587" stop-color="#ff0074"/><stop offset=".767" stop-color="#ff0046"/><stop offset="1.000" stop-color="#ff0023"/></linearGradient><linearGradient id="i92"><stop offset=".000" stop-color="#003dff"/><stop offset=".060" stop-color="#0134ff"/><stop offset=".227" stop-color="#8616ff"/><stop offset=".320" stop-color="#d0f"/><stop offset=".353" stop-color="#f0f"/><stop offset=".400" stop-color="#ff00d5"/><stop offset=".453" stop-color="#ff00b0"/><stop offset=".513" stop-color="#ff0091"/><stop offset=".587" stop-color="#ff0075"/><stop offset=".767" stop-color="#ff0047"/><stop offset="1.000" stop-color="#ff0024"/></linearGradient><linearGradient id="i93"><stop offset=".000" stop-color="#0039ff"/><stop offset=".060" stop-color="#0330ff"/><stop offset=".227" stop-color="#8712ff"/><stop offset=".300" stop-color="#c900ff"/><stop offset=".353" stop-color="#fe00ff"/><stop offset=".400" stop-color="#ff00d6"/><stop offset=".453" stop-color="#ff00b1"/><stop offset=".513" stop-color="#ff0092"/><stop offset=".587" stop-color="#ff0076"/><stop offset=".767" stop-color="#ff0048"/><stop offset="1.000" stop-color="#ff0025"/></linearGradient><linearGradient id="i94"><stop offset=".000" stop-color="#0035ff"/><stop offset=".053" stop-color="#002dff"/><stop offset=".220" stop-color="#820fff"/><stop offset=".280" stop-color="#b701ff"/><stop offset=".353" stop-color="#fe00ff"/><stop offset=".400" stop-color="#ff00d6"/><stop offset=".453" stop-color="#ff00b2"/><stop offset=".513" stop-color="#ff0093"/><stop offset=".587" stop-color="#f07"/><stop offset=".767" stop-color="#ff0049"/><stop offset="1.000" stop-color="#ff0026"/></linearGradient><linearGradient id="i95"><stop offset=".000" stop-color="#0032ff"/><stop offset=".053" stop-color="#0229ff"/><stop offset=".173" stop-color="#5d14ff"/><stop offset=".267" stop-color="#ab00ff"/><stop offset=".353" stop-color="#fd00ff"/><stop offset=".360" stop-color="#ff00fa"/><stop offset=".407" stop-color="#ff00d2"/><stop offset=".460" stop-color="#ff00af"/><stop offset=".593" stop-color="#ff0075"/><stop offset=".767" stop-color="#ff004a"/><stop offset="1.000" stop-color="#ff0027"/></linearGradient><linearGradient id="i96"><stop offset=".000" stop-color="#002eff"/><stop offset=".053" stop-color="#0426ff"/><stop offset=".247" stop-color="#9a00ff"/><stop offset=".353" stop-color="#fd00ff"/><stop offset=".360" stop-color="#ff00fb"/><stop offset=".407" stop-color="#ff00d3"/><stop offset=".460" stop-color="#ff00b0"/><stop offset=".593" stop-color="#ff0076"/><stop offset=".767" stop-color="#ff004a"/><stop offset="1.000" stop-color="#ff0028"/></linearGradient><linearGradient id="i97"><stop offset=".000" stop-color="#002aff"/><stop offset=".047" stop-color="#0123ff"/><stop offset=".227" stop-color="#8a00ff"/><stop offset=".360" stop-color="#ff00fb"/><stop offset=".407" stop-color="#ff00d4"/><stop offset=".460" stop-color="#ff00b1"/><stop offset=".593" stop-color="#f07"/><stop offset=".767" stop-color="#ff004b"/><stop offset="1.000" stop-color="#ff0028"/></linearGradient><linearGradient id="i98"><stop offset=".000" stop-color="#0027ff"/><stop offset=".047" stop-color="#031fff"/><stop offset=".213" stop-color="#8000ff"/><stop offset=".360" stop-color="#ff00fc"/><stop offset=".407" stop-color="#ff00d4"/><stop offset=".460" stop-color="#ff00b2"/><stop offset=".593" stop-color="#ff0078"/><stop offset=".767" stop-color="#ff004c"/><stop offset="1.000" stop-color="#ff0029"/></linearGradient><linearGradient id="i99"><stop offset=".000" stop-color="#0023ff"/><stop offset=".040" stop-color="#001dff"/><stop offset=".193" stop-color="#7100ff"/><stop offset=".360" stop-color="#ff00fc"/><stop offset=".407" stop-color="#ff00d5"/><stop offset=".460" stop-color="#ff00b3"/><stop offset=".593" stop-color="#ff0079"/><stop offset=".767" stop-color="#ff004d"/><stop offset="1.000" stop-color="#ff002a"/></linearGradient><linearGradient id="i100"><stop offset=".000" stop-color="#0020ff"/><stop offset=".040" stop-color="#0219ff"/><stop offset=".173" stop-color="#6300ff"/><stop offset=".360" stop-color="#ff00fd"/><stop offset=".407" stop-color="#ff00d6"/><stop offset=".460" stop-color="#ff00b4"/><stop offset=".593" stop-color="#ff007a"/><stop offset=".767" stop-color="#ff004e"/><stop offset="1.000" stop-color="#ff002b"/></linearGradient><linearGradient id="i101"><stop offset=".000" stop-color="#001cff"/><stop offset=".033" stop-color="#0017ff"/><stop offset=".113" stop-color="#3809ff"/><stop offset=".160" stop-color="#5a00ff"/><stop offset=".253" stop-color="#a300ff"/><stop offset=".360" stop-color="#ff00fd"/><stop offset=".407" stop-color="#ff00d6"/><stop offset=".460" stop-color="#ff00b5"/><stop offset=".593" stop-color="#ff007b"/><stop offset=".767" stop-color="#ff004f"/><stop offset="1.000" stop-color="#ff002c"/></linearGradient><linearGradient id="i102"><stop offset=".000" stop-color="#0019ff"/><stop offset=".033" stop-color="#0214ff"/><stop offset=".120" stop-color="#3e04ff"/><stop offset=".240" stop-color="#9800ff"/><stop offset=".360" stop-color="#ff00fd"/><stop offset=".407" stop-color="#ff00d7"/><stop offset=".467" stop-color="#ff00b2"/><stop offset=".600" stop-color="#ff007a"/><stop offset=".773" stop-color="#ff004f"/><stop offset="1.000" stop-color="#ff002d"/></linearGradient><linearGradient id="i103"><stop offset=".000" stop-color="#0016ff"/><stop offset=".033" stop-color="#0410ff"/><stop offset=".133" stop-color="#4900ff"/><stop offset=".247" stop-color="#9e00ff"/><stop offset=".360" stop-color="#ff00fe"/><stop offset=".407" stop-color="#ff00d8"/><stop offset=".467" stop-color="#ff00b3"/><stop offset=".600" stop-color="#ff007b"/><stop offset=".773" stop-color="#ff0050"/><stop offset="1.000" stop-color="#ff002d"/></linearGradient><linearGradient id="i104"><stop offset=".000" stop-color="#0012ff"/><stop offset=".027" stop-color="#010eff"/><stop offset=".100" stop-color="#30f"/><stop offset=".140" stop-color="#4f00ff"/><stop offset=".253" stop-color="#a400ff"/><stop offset=".360" stop-color="#ff00fe"/><stop offset=".407" stop-color="#ff00d9"/><stop offset=".467" stop-color="#ff00b3"/><stop offset=".600" stop-color="#ff007c"/><stop offset=".773" stop-color="#ff0050"/><stop offset="1.000" stop-color="#ff002e"/></linearGradient><linearGradient id="i105"><stop offset=".000" stop-color="#000fff"/><stop offset=".027" stop-color="#030bff"/><stop offset=".087" stop-color="#2b00ff"/><stop offset=".147" stop-color="#50f"/><stop offset=".260" stop-color="#a0f"/><stop offset=".360" stop-color="#f0f"/><stop offset=".407" stop-color="#ff00d9"/><stop offset=".467" stop-color="#ff00b4"/><stop offset=".600" stop-color="#ff007d"/><stop offset=".773" stop-color="#ff0051"/><stop offset="1.000" stop-color="#ff002f"/></linearGradient><linearGradient id="i106"><stop offset=".000" stop-color="#000cff"/><stop offset=".020" stop-color="#0008ff"/><stop offset=".067" stop-color="#1f00ff"/><stop offset=".160" stop-color="#5f00ff"/><stop offset=".267" stop-color="#af00ff"/><stop offset=".360" stop-color="#f0f"/><stop offset=".413" stop-color="#ff00d5"/><stop offset=".467" stop-color="#ff00b5"/><stop offset=".600" stop-color="#ff007e"/><stop offset=".773" stop-color="#ff0052"/><stop offset="1.000" stop-color="#ff0030"/></linearGradient><linearGradient id="i107"><stop offset=".000" stop-color="#0009ff"/><stop offset=".020" stop-color="#0205ff"/><stop offset=".047" stop-color="#1400ff"/><stop offset=".167" stop-color="#6500ff"/><stop offset=".267" stop-color="#b000ff"/><stop offset=".360" stop-color="#fe00ff"/><stop offset=".413" stop-color="#ff00d6"/><stop offset=".467" stop-color="#ff00b6"/><stop offset=".600" stop-color="#ff007f"/><stop offset=".773" stop-color="#ff0053"/><stop offset="1.000" stop-color="#ff0031"/></linearGradient><linearGradient id="i108"><stop offset=".000" stop-color="#0005ff"/><stop offset=".020" stop-color="#0402ff"/><stop offset=".167" stop-color="#60f"/><stop offset=".267" stop-color="#b000ff"/><stop offset=".360" stop-color="#fe00ff"/><stop offset=".413" stop-color="#ff00d7"/><stop offset=".467" stop-color="#ff00b7"/><stop offset=".600" stop-color="#ff007f"/><stop offset=".773" stop-color="#ff0054"/><stop offset="1.000" stop-color="#ff0031"/></linearGradient><linearGradient id="i109"><stop offset=".000" stop-color="#0002ff"/><stop offset=".013" stop-color="#0100ff"/><stop offset=".173" stop-color="#6b00ff"/><stop offset=".273" stop-color="#b600ff"/><stop offset=".360" stop-color="#fe00ff"/><stop offset=".467" stop-color="#ff00b7"/><stop offset=".600" stop-color="#ff0080"/><stop offset=".773" stop-color="#f05"/><stop offset="1.000" stop-color="#ff0032"/></linearGradient><linearGradient id="i110"><stop offset=".000" stop-color="#00f"/><stop offset=".013" stop-color="#0300ff"/><stop offset=".173" stop-color="#6c00ff"/><stop offset=".367" stop-color="#ff00fb"/><stop offset=".413" stop-color="#ff00d8"/><stop offset=".473" stop-color="#ff00b5"/><stop offset=".607" stop-color="#ff007f"/><stop offset=".780" stop-color="#ff0054"/><stop offset="1.000" stop-color="#f03"/></linearGradient><linearGradient id="n0"><stop offset=".000" stop-color="#78ffcb"/><stop offset=".779" stop-color="#fdffc4"/><stop offset="1.009" stop-color="#ffdba6"/></linearGradient><linearGradient id="n1"><stop offset=".000" stop-color="#79ffce"/><stop offset=".779" stop-color="#fffec6"/><stop offset="1.009" stop-color="#ffd9a7"/></linearGradient><linearGradient id="n2"><stop offset=".000" stop-color="#7bffd0"/><stop offset=".761" stop-color="#ffffc9"/><stop offset="1.009" stop-color="#ffd7a7"/></linearGradient><linearGradient id="n3"><stop offset=".000" stop-color="#7dffd2"/><stop offset=".743" stop-color="#ffc"/><stop offset="1.009" stop-color="#ffd5a8"/></linearGradient><linearGradient id="n4"><stop offset=".000" stop-color="#7effd4"/><stop offset=".726" stop-color="#feffcf"/><stop offset="1.009" stop-color="#ffd2a8"/></linearGradient><linearGradient id="n5"><stop offset=".000" stop-color="#80ffd7"/><stop offset=".708" stop-color="#fdffd2"/><stop offset="1.009" stop-color="#ffd0a9"/></linearGradient><linearGradient id="n6"><stop offset=".000" stop-color="#82ffd9"/><stop offset=".708" stop-color="#fffed3"/><stop offset="1.009" stop-color="#ffceaa"/></linearGradient><linearGradient id="n7"><stop offset=".000" stop-color="#84ffdc"/><stop offset=".690" stop-color="#ffffd7"/><stop offset="1.009" stop-color="#fca"/></linearGradient><linearGradient id="n8"><stop offset=".000" stop-color="#85ffde"/><stop offset=".673" stop-color="#feffda"/><stop offset="1.009" stop-color="#ffcaab"/></linearGradient><linearGradient id="n9"><stop offset=".000" stop-color="#87ffe0"/><stop offset=".655" stop-color="#feffdd"/><stop offset="1.009" stop-color="#ffc8ab"/></linearGradient><linearGradient id="n10"><stop offset=".000" stop-color="#89ffe3"/><stop offset=".637" stop-color="#fdffe0"/><stop offset="1.009" stop-color="#ffc6ac"/></linearGradient><linearGradient id="n11"><stop offset=".000" stop-color="#8bffe5"/><stop offset=".637" stop-color="#fffee2"/><stop offset=".814" stop-color="#ffdfc5"/><stop offset="1.009" stop-color="#ffc4ac"/></linearGradient><linearGradient id="n12"><stop offset=".000" stop-color="#8dffe8"/><stop offset=".619" stop-color="#ffffe5"/><stop offset=".796" stop-color="#ffe0c8"/><stop offset="1.009" stop-color="#ffc2ad"/></linearGradient><linearGradient id="n13"><stop offset=".000" stop-color="#8fffea"/><stop offset=".602" stop-color="#feffe8"/><stop offset=".796" stop-color="#ffddc9"/><stop offset="1.009" stop-color="#ffc0ad"/></linearGradient><linearGradient id="n14"><stop offset=".000" stop-color="#90ffed"/><stop offset=".584" stop-color="#feffeb"/><stop offset=".796" stop-color="#ffdbc9"/><stop offset="1.009" stop-color="#ffbeae"/></linearGradient><linearGradient id="n15"><stop offset=".000" stop-color="#92fff0"/><stop offset=".584" stop-color="#fffded"/><stop offset=".779" stop-color="#ffdbcc"/><stop offset="1.009" stop-color="#ffbcae"/></linearGradient><linearGradient id="n16"><stop offset=".000" stop-color="#94fff2"/><stop offset=".566" stop-color="#fffef0"/><stop offset=".779" stop-color="#ffd9cd"/><stop offset="1.009" stop-color="#ffbaaf"/></linearGradient><linearGradient id="n17"><stop offset=".000" stop-color="#96fff5"/><stop offset=".549" stop-color="#fffff4"/><stop offset=".761" stop-color="#ffd9d0"/><stop offset="1.009" stop-color="#ffb8af"/></linearGradient><linearGradient id="n18"><stop offset=".000" stop-color="#98fff8"/><stop offset=".531" stop-color="#fefff7"/><stop offset=".761" stop-color="#ffd7d0"/><stop offset="1.009" stop-color="#ffb6b0"/></linearGradient><linearGradient id="n19"><stop offset=".000" stop-color="#9afffb"/><stop offset=".513" stop-color="#fefffa"/><stop offset=".761" stop-color="#ffd4d0"/><stop offset="1.009" stop-color="#ffb4b0"/></linearGradient><linearGradient id="n20"><stop offset=".000" stop-color="#9dfffd"/><stop offset=".513" stop-color="#fffdfc"/><stop offset=".743" stop-color="#ffd5d3"/><stop offset="1.009" stop-color="#ffb2b0"/></linearGradient><linearGradient id="n21"><stop offset=".000" stop-color="#9efeff"/><stop offset=".496" stop-color="#fefdff"/><stop offset=".743" stop-color="#ffd2d4"/><stop offset="1.009" stop-color="#ffb0b1"/></linearGradient><linearGradient id="n22"><stop offset=".000" stop-color="#9efbff"/><stop offset=".496" stop-color="#fefaff"/><stop offset=".743" stop-color="#ffd0d4"/><stop offset="1.009" stop-color="#ffaeb1"/></linearGradient><linearGradient id="n23"><stop offset=".000" stop-color="#9ff8ff"/><stop offset=".496" stop-color="#fef7ff"/><stop offset=".743" stop-color="#ffced5"/><stop offset="1.009" stop-color="#ffacb2"/></linearGradient><linearGradient id="n24"><stop offset=".000" stop-color="#9ff5ff"/><stop offset=".496" stop-color="#fef4ff"/><stop offset=".743" stop-color="#ffcbd5"/><stop offset="1.009" stop-color="#ffaab2"/></linearGradient><linearGradient id="n25"><stop offset=".000" stop-color="#9ff3ff"/><stop offset=".496" stop-color="#fdf1ff"/><stop offset=".743" stop-color="#ffc9d5"/><stop offset="1.009" stop-color="#ffa8b3"/></linearGradient><linearGradient id="n26"><stop offset=".000" stop-color="#9ff0ff"/><stop offset=".513" stop-color="#ffecfd"/><stop offset=".743" stop-color="#ffc7d6"/><stop offset="1.009" stop-color="#ffa6b3"/></linearGradient><linearGradient id="n27"><stop offset=".000" stop-color="#a0edff"/><stop offset=".513" stop-color="#ffeafd"/><stop offset=".743" stop-color="#ffc5d6"/><stop offset="1.009" stop-color="#ffa4b4"/></linearGradient><linearGradient id="n28"><stop offset=".000" stop-color="#a0eaff"/><stop offset=".513" stop-color="#ffe7fe"/><stop offset=".743" stop-color="#ffc2d6"/><stop offset="1.009" stop-color="#ffa2b4"/></linearGradient><linearGradient id="n29"><stop offset=".000" stop-color="#a0e8ff"/><stop offset=".513" stop-color="#ffe4fe"/><stop offset=".743" stop-color="#ffc0d7"/><stop offset="1.009" stop-color="#ffa0b5"/></linearGradient><linearGradient id="n30"><stop offset=".000" stop-color="#a1e5ff"/><stop offset=".513" stop-color="#ffe1fe"/><stop offset=".743" stop-color="#ffbed7"/><stop offset="1.009" stop-color="#ff9eb5"/></linearGradient><linearGradient id="n31"><stop offset=".000" stop-color="#a1e2ff"/><stop offset=".513" stop-color="#ffdffe"/><stop offset=".743" stop-color="#ffbbd8"/><stop offset="1.009" stop-color="#ff9cb5"/></linearGradient><linearGradient id="n32"><stop offset=".000" stop-color="#a1e0ff"/><stop offset=".513" stop-color="#ffdcff"/><stop offset=".743" stop-color="#ffb9d8"/><stop offset="1.009" stop-color="#ff9bb6"/></linearGradient><linearGradient id="n33"><stop offset=".000" stop-color="#a2ddff"/><stop offset=".513" stop-color="#ffdaff"/><stop offset=".743" stop-color="#ffb7d8"/><stop offset="1.009" stop-color="#ff99b6"/></linearGradient><linearGradient id="n34"><stop offset=".000" stop-color="#a2dbff"/><stop offset=".513" stop-color="#ffd7ff"/><stop offset=".743" stop-color="#ffb5d9"/><stop offset="1.009" stop-color="#ff97b7"/></linearGradient><linearGradient id="n35"><stop offset=".000" stop-color="#a2d8ff"/><stop offset=".513" stop-color="#ffd4ff"/><stop offset=".743" stop-color="#ffb3d9"/><stop offset="1.009" stop-color="#ff95b7"/></linearGradient><linearGradient id="n36"><stop offset=".000" stop-color="#a2d6ff"/><stop offset=".513" stop-color="#ffd1ff"/><stop offset=".743" stop-color="#ffb1d9"/><stop offset="1.009" stop-color="#ff93b8"/></linearGradient><linearGradient id="n37"><stop offset=".000" stop-color="#a3d3ff"/><stop offset=".513" stop-color="#fecfff"/><stop offset=".743" stop-color="#ffaeda"/><stop offset="1.009" stop-color="#ff91b8"/></linearGradient><linearGradient id="n38"><stop offset=".000" stop-color="#a3d1ff"/><stop offset=".513" stop-color="#feccff"/><stop offset=".761" stop-color="#ffaad7"/><stop offset="1.009" stop-color="#ff8fb8"/></linearGradient><linearGradient id="n39"><stop offset=".000" stop-color="#a3ceff"/><stop offset=".513" stop-color="#fec9ff"/><stop offset=".761" stop-color="#ffa8d8"/><stop offset="1.009" stop-color="#ff8eb9"/></linearGradient><linearGradient id="n40"><stop offset=".000" stop-color="#a4ccff"/><stop offset=".513" stop-color="#fec7ff"/><stop offset=".761" stop-color="#ffa6d8"/><stop offset="1.009" stop-color="#ff8cb9"/></linearGradient><linearGradient id="n41"><stop offset=".000" stop-color="#a4c9ff"/><stop offset=".513" stop-color="#fec4ff"/><stop offset=".761" stop-color="#ffa4d8"/><stop offset="1.009" stop-color="#ff8aba"/></linearGradient><linearGradient id="n42"><stop offset=".000" stop-color="#a4c7ff"/><stop offset=".513" stop-color="#fdc1ff"/><stop offset=".761" stop-color="#ffa2d9"/><stop offset="1.009" stop-color="#ff88ba"/></linearGradient><clipPath id="insc"><rect x="1109.9" y="33.4" width="169.5" height="126.29999999999998"/></clipPath><linearGradient id="bar" x1="0" y1="0" x2="0" y2="1"><stop offset="0" stop-color="#474747"/><stop offset=".08" stop-color="#3c3c3c"/><stop offset="1" stop-color="#1e1e1e"/></linearGradient><linearGradient id="btn" x1="0" y1="0" x2="0" y2="1"><stop offset="0" stop-color="#a8a8a8"/><stop offset="1" stop-color="#6a6a6a"/></linearGradient><linearGradient id="btn2" x1="0" y1="0" x2="0" y2="1"><stop offset="0" stop-color="#9c9c9c"/><stop offset="1" stop-color="#707070"/></linearGradient><linearGradient id="sel" x1="0" y1="0" x2="0" y2="1"><stop offset="0" stop-color="#8a8a8a"/><stop offset="1" stop-color="#6c6c6c"/></linearGradient><linearGradient id="swc" x1="0" y1="0" x2="0" y2="1"><stop offset="0" stop-color="#242424"/><stop offset=".6" stop-color="#2e2e2e"/><stop offset="1" stop-color="#3c3c3c"/></linearGradient><linearGradient id="emb" x1="0" y1="0" x2="0" y2="1"><stop offset="0" stop-color="#000" stop-opacity=".10"/><stop offset=".55" stop-color="#fff" stop-opacity=".10"/><stop offset="1" stop-color="#fff" stop-opacity=".38"/></linearGradient><linearGradient id="btnt" x1="0" y1="0" x2="0" y2="1"><stop offset="0" stop-color="#adadad"/><stop offset="1" stop-color="#8e8e8e"/></linearGradient><linearGradient id="btnb" x1="0" y1="0" x2="0" y2="1"><stop offset="0" stop-color="#9c9c9c"/><stop offset="1" stop-color="#767676"/></linearGradient><linearGradient id="btnw" x1="0" y1="0" x2="0" y2="1"><stop offset="0" stop-color="#b4b4b4"/><stop offset=".5" stop-color="#9a9a9a"/><stop offset="1" stop-color="#808080"/></linearGradient></defs><rect x="0.0" y="0.0" width="1280.0" height="617.0" fill="#353535"/>
<text x="17.7" y="39.5" font-size="26.5" fill="#f2f2f2" textLength="143.0" lengthAdjust="spacingAndGlyphs">Saturation</text>
<text x="167.8" y="39.5" font-size="26.5" fill="#f2f2f2" textLength="104.5" lengthAdjust="spacingAndGlyphs">Sweeps</text>
<rect x="32.4" y="76.5" width="242.9" height="281.8" fill="#232323"/>
<text x="139.8" y="73.2" font-size="10.8" text-anchor="middle" textLength="61.5" lengthAdjust="spacingAndGlyphs">DeltaE 2000</text>
<rect x="34.0" y="82.3" width="43.2" height="4.2" fill="#000" opacity=".7"/>
<rect x="32.9" y="81.3" width="42.6" height="3.9" fill="#e02828"/>
<rect x="32.9" y="81.3" width="42.6" height="3.9" fill="url(#gloss)"/>
<rect x="34.0" y="87.9" width="33.5" height="4.2" fill="#000" opacity=".7"/>
<rect x="32.9" y="86.9" width="32.9" height="3.9" fill="#28d028"/>
<rect x="32.9" y="86.9" width="32.9" height="3.9" fill="url(#gloss)"/>
<rect x="34.0" y="93.6" width="41.9" height="4.2" fill="#000" opacity=".7"/>
<rect x="32.9" y="92.6" width="41.3" height="3.9" fill="#2030d8"/>
<rect x="32.9" y="92.6" width="41.3" height="3.9" fill="url(#gloss)"/>
<rect x="34.0" y="99.0" width="29.0" height="4.2" fill="#000" opacity=".7"/>
<rect x="32.9" y="98.0" width="28.4" height="3.9" fill="#28d8e0"/>
<rect x="32.9" y="98.0" width="28.4" height="3.9" fill="url(#gloss)"/>
<rect x="34.0" y="104.3" width="36.7" height="4.2" fill="#000" opacity=".7"/>
<rect x="32.9" y="103.3" width="36.1" height="3.9" fill="#d030d8"/>
<rect x="32.9" y="103.3" width="36.1" height="3.9" fill="url(#gloss)"/>
<rect x="34.0" y="109.9" width="18.0" height="4.2" fill="#000" opacity=".7"/>
<rect x="32.9" y="108.9" width="17.4" height="3.9" fill="#e8e030"/>
<rect x="32.9" y="108.9" width="17.4" height="3.9" fill="url(#gloss)"/>
<rect x="34.0" y="129.3" width="7.1" height="4.2" fill="#000" opacity=".7"/>
<rect x="32.9" y="128.3" width="6.5" height="3.9" fill="#e06868"/>
<rect x="32.9" y="128.3" width="6.5" height="3.9" fill="url(#gloss)"/>
<rect x="34.0" y="134.9" width="7.7" height="4.2" fill="#000" opacity=".7"/>
<rect x="32.9" y="133.9" width="7.1" height="3.9" fill="#68e068"/>
<rect x="32.9" y="133.9" width="7.1" height="3.9" fill="url(#gloss)"/>
<rect x="34.0" y="140.6" width="13.5" height="4.2" fill="#000" opacity=".7"/>
<rect x="32.9" y="139.6" width="12.9" height="3.9" fill="#5868c8"/>
<rect x="32.9" y="139.6" width="12.9" height="3.9" fill="url(#gloss)"/>
<rect x="34.0" y="146.0" width="3.8" height="4.2" fill="#000" opacity=".7"/>
<rect x="32.9" y="145.0" width="3.2" height="3.9" fill="#a8e8f0"/>
<rect x="32.9" y="145.0" width="3.2" height="3.9" fill="url(#gloss)"/>
<rect x="34.0" y="151.3" width="4.5" height="4.2" fill="#000" opacity=".7"/>
<rect x="32.9" y="150.3" width="3.9" height="3.9" fill="#c878c8"/>
<rect x="32.9" y="150.3" width="3.9" height="3.9" fill="url(#gloss)"/>
<rect x="34.0" y="156.9" width="8.7" height="4.2" fill="#000" opacity=".7"/>
<rect x="32.9" y="155.9" width="8.1" height="3.9" fill="#f0f060"/>
<rect x="32.9" y="155.9" width="8.1" height="3.9" fill="url(#gloss)"/>
<rect x="34.0" y="176.3" width="16.7" height="4.2" fill="#000" opacity=".7"/>
<rect x="32.9" y="175.3" width="16.1" height="3.9" fill="#d88888"/>
<rect x="32.9" y="175.3" width="16.1" height="3.9" fill="url(#gloss)"/>
<rect x="34.0" y="181.9" width="9.5" height="4.2" fill="#000" opacity=".7"/>
<rect x="32.9" y="180.9" width="8.9" height="3.9" fill="#90d890"/>
<rect x="32.9" y="180.9" width="8.9" height="3.9" fill="url(#gloss)"/>
<rect x="34.0" y="187.6" width="12.9" height="4.2" fill="#000" opacity=".7"/>
<rect x="32.9" y="186.6" width="12.3" height="3.9" fill="#7080b0"/>
<rect x="32.9" y="186.6" width="12.3" height="3.9" fill="url(#gloss)"/>
<rect x="34.0" y="193.0" width="10.6" height="4.2" fill="#000" opacity=".7"/>
<rect x="32.9" y="192.0" width="10.0" height="3.9" fill="#c0f0f8"/>
<rect x="32.9" y="192.0" width="10.0" height="3.9" fill="url(#gloss)"/>
<rect x="34.0" y="198.3" width="5.1" height="4.2" fill="#000" opacity=".7"/>
<rect x="32.9" y="197.3" width="4.5" height="3.9" fill="#c8a0c8"/>
<rect x="32.9" y="197.3" width="4.5" height="3.9" fill="url(#gloss)"/>
<rect x="34.0" y="203.9" width="21.9" height="4.2" fill="#000" opacity=".7"/>
<rect x="32.9" y="202.9" width="21.3" height="3.9" fill="#f0f0b0"/>
<rect x="32.9" y="202.9" width="21.3" height="3.9" fill="url(#gloss)"/>
<rect x="34.0" y="223.3" width="20.0" height="4.2" fill="#000" opacity=".7"/>
<rect x="32.9" y="222.3" width="19.4" height="3.9" fill="#a86c7c"/>
<rect x="32.9" y="222.3" width="19.4" height="3.9" fill="url(#gloss)"/>
<rect x="34.0" y="228.9" width="7.1" height="4.2" fill="#000" opacity=".7"/>
<rect x="32.9" y="227.9" width="6.5" height="3.9" fill="#a8d8a8"/>
<rect x="32.9" y="227.9" width="6.5" height="3.9" fill="url(#gloss)"/>
<rect x="34.0" y="234.6" width="42.5" height="4.2" fill="#000" opacity=".7"/>
<rect x="32.9" y="233.6" width="41.9" height="3.9" fill="#4c545a"/>
<rect x="32.9" y="233.6" width="41.9" height="3.9" fill="url(#gloss)"/>
<rect x="34.0" y="240.0" width="24.5" height="4.2" fill="#000" opacity=".7"/>
<rect x="32.9" y="239.0" width="23.9" height="3.9" fill="#c4e4f4"/>
<rect x="32.9" y="239.0" width="23.9" height="3.9" fill="url(#gloss)"/>
<rect x="34.0" y="245.3" width="36.1" height="4.2" fill="#000" opacity=".7"/>
<rect x="32.9" y="244.3" width="35.5" height="3.9" fill="#c0a8b8"/>
<rect x="32.9" y="244.3" width="35.5" height="3.9" fill="url(#gloss)"/>
<rect x="34.0" y="250.9" width="7.1" height="4.2" fill="#000" opacity=".7"/>
<rect x="32.9" y="249.9" width="6.5" height="3.9" fill="#f4ece4"/>
<rect x="32.9" y="249.9" width="6.5" height="3.9" fill="url(#gloss)"/>
<rect x="34.0" y="304.4" width="24.0" height="4.2" fill="#000" opacity=".7"/>
<rect x="32.9" y="303.3" width="23.4" height="4.2" fill="#f4f4f4"/>
<rect x="32.9" y="303.4" width="23.4" height="3.9" fill="url(#gloss)"/>
<path d="M64.7 76.5V361.8M96.9 76.5V361.8M129.2 76.5V361.8M161.4 76.5V361.8M193.7 76.5V361.8M226.0 76.5V361.8M258.2 76.5V361.8M32.4 76.5V361.8M28.4 76.5H275.3V358.3H28.4M28.4 123.5H32.4M28.4 170.5H32.4M28.4 217.5H32.4M28.4 264.5H32.4M28.4 311.5H32.4" stroke="#b8b8b8" fill="none"/>
<text x="31.8" y="104.3" font-size="11.2" text-anchor="end">100%</text>
<text x="31.8" y="151.3" font-size="11.2" text-anchor="end">75%</text>
<text x="31.8" y="198.3" font-size="11.2" text-anchor="end">50%</text>
<text x="31.8" y="245.3" font-size="11.2" text-anchor="end">25%</text>
<text x="31.8" y="292.3" font-size="11.2" text-anchor="end">100</text>
<text x="31.8" y="339.3" font-size="11.2" text-anchor="end">0</text>
<text x="32.4" y="373.7" font-size="11.2" text-anchor="middle">0</text>
<text x="64.7" y="373.7" font-size="11.2" text-anchor="middle">2</text>
<text x="96.9" y="373.7" font-size="11.2" text-anchor="middle">4</text>
<text x="129.2" y="373.7" font-size="11.2" text-anchor="middle">6</text>
<text x="161.4" y="373.7" font-size="11.2" text-anchor="middle">8</text>
<text x="193.7" y="373.7" font-size="11.2" text-anchor="middle">10</text>
<text x="226.0" y="373.7" font-size="11.2" text-anchor="middle">12</text>
<text x="258.2" y="373.7" font-size="11.2" text-anchor="middle">14</text>
<rect x="315.9" y="30.4" width="111.5" height="216.0" fill="#232323"/>
<path d="M315.9 30.4V249.9M427.4 30.4V249.9M311.4 30.4H427.4M311.4 66.4H427.4M311.4 102.4H427.4M311.4 138.4H427.4M311.4 174.4H427.4M311.4 210.4H427.4M311.4 246.4H427.4" stroke="#b8b8b8" fill="none"/>
<text x="310.9" y="34.2" font-size="11.2" text-anchor="end">15</text>
<text x="310.9" y="70.2" font-size="11.2" text-anchor="end">10</text>
<text x="310.9" y="106.2" font-size="11.2" text-anchor="end">5</text>
<text x="310.9" y="142.2" font-size="11.2" text-anchor="end">0</text>
<text x="310.9" y="178.2" font-size="11.2" text-anchor="end">-5</text>
<text x="310.9" y="214.2" font-size="11.2" text-anchor="end">-10</text>
<text x="310.9" y="250.2" font-size="11.2" text-anchor="end">-15</text>
<text x="361.1" y="26.6" font-size="10.8" text-anchor="middle" textLength="31.0" lengthAdjust="spacingAndGlyphs">DeltaL</text>
<text x="371.6" y="257.3" font-size="11.2" text-anchor="middle">0</text>
<rect x="468.2" y="30.4" width="112.9" height="216.0" fill="#232323"/>
<path d="M468.2 30.4V249.9M581.1 30.4V249.9M463.7 30.4H581.1M463.7 66.4H581.1M463.7 102.4H581.1M463.7 138.4H581.1M463.7 174.4H581.1M463.7 210.4H581.1M463.7 246.4H581.1" stroke="#b8b8b8" fill="none"/>
<text x="463.2" y="34.2" font-size="11.2" text-anchor="end">15</text>
<text x="463.2" y="70.2" font-size="11.2" text-anchor="end">10</text>
<text x="463.2" y="106.2" font-size="11.2" text-anchor="end">5</text>
<text x="463.2" y="142.2" font-size="11.2" text-anchor="end">0</text>
<text x="463.2" y="178.2" font-size="11.2" text-anchor="end">-5</text>
<text x="463.2" y="214.2" font-size="11.2" text-anchor="end">-10</text>
<text x="463.2" y="250.2" font-size="11.2" text-anchor="end">-15</text>
<text x="514.1" y="26.6" font-size="10.8" text-anchor="middle" textLength="33.0" lengthAdjust="spacingAndGlyphs">DeltaC</text>
<text x="524.6" y="257.3" font-size="11.2" text-anchor="middle">0</text>
<rect x="622.2" y="30.4" width="111.6" height="216.0" fill="#232323"/>
<path d="M622.2 30.4V249.9M733.8 30.4V249.9M617.7 30.4H733.8M617.7 66.4H733.8M617.7 102.4H733.8M617.7 138.4H733.8M617.7 174.4H733.8M617.7 210.4H733.8M617.7 246.4H733.8" stroke="#b8b8b8" fill="none"/>
<text x="617.2" y="34.2" font-size="11.2" text-anchor="end">15</text>
<text x="617.2" y="70.2" font-size="11.2" text-anchor="end">10</text>
<text x="617.2" y="106.2" font-size="11.2" text-anchor="end">5</text>
<text x="617.2" y="142.2" font-size="11.2" text-anchor="end">0</text>
<text x="617.2" y="178.2" font-size="11.2" text-anchor="end">-5</text>
<text x="617.2" y="214.2" font-size="11.2" text-anchor="end">-10</text>
<text x="617.2" y="250.2" font-size="11.2" text-anchor="end">-15</text>
<text x="667.5" y="26.6" font-size="10.8" text-anchor="middle" textLength="34.0" lengthAdjust="spacingAndGlyphs">DeltaH</text>
<text x="678.0" y="257.3" font-size="11.2" text-anchor="middle">0</text>
<rect x="289.4" y="268.2" width="460.0" height="111.3" fill="#000"/>
<rect x="311.6" y="273.6" width="135.0" height="89.2" fill="none" stroke="#fff" stroke-width="1.2"/>
<rect x="469.3" y="273.1" width="136.2" height="90.0" fill="#fff"/>
<rect x="469.3" y="273.1" width="122.0" height="39.0" fill="#f6faff"/>
<text x="378.4" y="375.0" font-size="8.6" text-anchor="middle" fill="#fff" font-weight="bold">0</text>
<text x="537.2" y="375.0" font-size="8.6" text-anchor="middle" fill="#fff" font-weight="bold">100</text>
<text transform="translate(300.3 293.2) rotate(-90)" font-size="8.2" font-weight="bold" fill="#fff" text-anchor="middle">Actual</text>
<text transform="translate(300.3 343.4) rotate(-90)" font-size="8.2" font-weight="bold" fill="#fff" text-anchor="middle">Target</text>
<text x="10.9" y="429.2" font-size="20" fill="#f2f2f2" textLength="77.0" lengthAdjust="spacingAndGlyphs" stroke="#f2f2f2" stroke-width=".45">Current</text>
<text x="97.7" y="429.2" font-size="20" fill="#f2f2f2" textLength="82.5" lengthAdjust="spacingAndGlyphs" stroke="#f2f2f2" stroke-width=".45">Reading</text>
<text x="10.9" y="458.4" font-size="16.5" fill="#f2f2f2" textLength="30.4" lengthAdjust="spacingAndGlyphs" stroke="#f2f2f2" stroke-width=".3">x: 0</text>
<text x="10.9" y="486.3" font-size="16.5" fill="#f2f2f2" textLength="30.6" lengthAdjust="spacingAndGlyphs" stroke="#f2f2f2" stroke-width=".3">y: 0</text>
<text x="10.9" y="513.1" font-size="16.5" fill="#f2f2f2" textLength="36.5" lengthAdjust="spacingAndGlyphs" stroke="#f2f2f2" stroke-width=".3">fL: 0</text>
<text x="10.9" y="541.7" font-size="16.5" fill="#f2f2f2" textLength="74.2" lengthAdjust="spacingAndGlyphs" stroke="#f2f2f2" stroke-width=".3">cd/m²: 0</text>
<rect x="265.9" y="415.7" width="204.3" height="122.2" fill="#232323"/>
<path d="M265.9 415.7V541.4M470.2 415.7V541.4M261.4 415.7H470.2M261.4 446.2H470.2M261.4 476.8H470.2M261.4 507.3H470.2M261.4 537.9H470.2" stroke="#b8b8b8" fill="none"/>
<text x="261.4" y="419.5" font-size="11.2" text-anchor="end">4</text>
<text x="261.4" y="450.1" font-size="11.2" text-anchor="end">2</text>
<text x="261.4" y="480.6" font-size="11.2" text-anchor="end">0</text>
<text x="261.4" y="511.1" font-size="11.2" text-anchor="end">-2</text>
<text x="261.4" y="541.7" font-size="11.2" text-anchor="end">-4</text>
<text x="361.0" y="412.3" font-size="10.8" text-anchor="middle" textLength="63.5" lengthAdjust="spacingAndGlyphs">RGB Balance</text>
<text x="368.8" y="549.5" font-size="11.2" text-anchor="middle">0</text>
<rect x="486.5" y="398.9" width="289.3" height="12.4" fill="#2d2d2d"/>
<rect x="486.5" y="411.3" width="289.3" height="9.4" fill="#0a0a0a"/>
<rect x="486.5" y="420.6" width="289.3" height="19.4" fill="#474747"/>
<rect x="486.5" y="420.6" width="15.2" height="19.4" fill="#2e2e2e"/>
<rect x="486.5" y="439.8" width="289.3" height="19.4" fill="#7c7c7c"/>
<rect x="486.5" y="439.8" width="15.2" height="19.4" fill="#3c3c3c"/>
<rect x="486.5" y="459.1" width="289.3" height="19.4" fill="#474747"/>
<rect x="486.5" y="459.1" width="15.2" height="19.4" fill="#2e2e2e"/>
<rect x="486.5" y="478.3" width="289.3" height="19.4" fill="#7c7c7c"/>
<rect x="486.5" y="478.3" width="15.2" height="19.4" fill="#3c3c3c"/>
<rect x="486.5" y="497.5" width="289.3" height="19.4" fill="#474747"/>
<rect x="486.5" y="497.5" width="15.2" height="19.4" fill="#2e2e2e"/>
<rect x="486.5" y="516.8" width="289.3" height="19.4" fill="#7c7c7c"/>
<rect x="486.5" y="516.8" width="15.2" height="19.4" fill="#3c3c3c"/>
<rect x="486.5" y="398.9" width="15.2" height="21.7" fill="#050505"/>
<text x="632.5" y="414.4" font-size="12.5" fill="#f4f4f4" textLength="9.0" lengthAdjust="spacingAndGlyphs" stroke="#f4f4f4" stroke-width=".3">0</text>
<text x="698.0" y="414.4" font-size="12.5" fill="#f4f4f4" textLength="26.0" lengthAdjust="spacingAndGlyphs" stroke="#f4f4f4" stroke-width=".3">100</text>
<text x="507.0" y="435.1" font-size="12.5" fill="#f4f4f4" textLength="62.0" lengthAdjust="spacingAndGlyphs" stroke="#f4f4f4" stroke-width=".3">x: CIE31</text>
<text x="633.0" y="435.1" font-size="12.5" fill="#f4f4f4" textLength="52.0" lengthAdjust="spacingAndGlyphs" stroke="#f4f4f4" stroke-width=".3">0,0000</text>
<text x="697.3" y="435.1" font-size="12.5" fill="#f4f4f4" textLength="52.3" lengthAdjust="spacingAndGlyphs" stroke="#f4f4f4" stroke-width=".3">0,3098</text>
<text x="507.0" y="454.3" font-size="12.5" fill="#f4f4f4" textLength="62.0" lengthAdjust="spacingAndGlyphs" stroke="#f4f4f4" stroke-width=".3">y: CIE31</text>
<text x="633.0" y="454.3" font-size="12.5" fill="#f4f4f4" textLength="52.0" lengthAdjust="spacingAndGlyphs" stroke="#f4f4f4" stroke-width=".3">0,0000</text>
<text x="697.3" y="454.3" font-size="12.5" fill="#f4f4f4" textLength="52.3" lengthAdjust="spacingAndGlyphs" stroke="#f4f4f4" stroke-width=".3">0,3268</text>
<text x="507.0" y="473.6" font-size="12.5" fill="#f4f4f4" textLength="8.5" lengthAdjust="spacingAndGlyphs" stroke="#f4f4f4" stroke-width=".3">Y</text>
<text x="633.0" y="473.6" font-size="12.5" fill="#f4f4f4" textLength="52.0" lengthAdjust="spacingAndGlyphs" stroke="#f4f4f4" stroke-width=".3">0,0000</text>
<text x="697.3" y="473.6" font-size="12.5" fill="#f4f4f4" textLength="72.0" lengthAdjust="spacingAndGlyphs" stroke="#f4f4f4" stroke-width=".3">119,8749</text>
<text x="507.0" y="492.8" font-size="12.5" fill="#f4f4f4" textLength="113.0" lengthAdjust="spacingAndGlyphs" stroke="#f4f4f4" stroke-width=".3">Target x:CIE31</text>
<text x="633.0" y="492.8" font-size="12.5" fill="#f4f4f4" textLength="52.0" lengthAdjust="spacingAndGlyphs" stroke="#f4f4f4" stroke-width=".3">0,3127</text>
<text x="697.3" y="492.8" font-size="12.5" fill="#f4f4f4" textLength="52.3" lengthAdjust="spacingAndGlyphs" stroke="#f4f4f4" stroke-width=".3">0,3127</text>
<text x="507.0" y="512.0" font-size="12.5" fill="#f4f4f4" textLength="113.5" lengthAdjust="spacingAndGlyphs" stroke="#f4f4f4" stroke-width=".3">Target y:CIE31</text>
<text x="633.0" y="512.0" font-size="12.5" fill="#f4f4f4" textLength="52.0" lengthAdjust="spacingAndGlyphs" stroke="#f4f4f4" stroke-width=".3">0,3290</text>
<text x="697.3" y="512.0" font-size="12.5" fill="#f4f4f4" textLength="52.3" lengthAdjust="spacingAndGlyphs" stroke="#f4f4f4" stroke-width=".3">0,3290</text>
<text x="507.0" y="531.2" font-size="12.5" fill="#f4f4f4" textLength="65.0" lengthAdjust="spacingAndGlyphs" stroke="#f4f4f4" stroke-width=".3">Target Y</text>
<text x="633.0" y="531.2" font-size="12.5" fill="#f4f4f4" textLength="52.0" lengthAdjust="spacingAndGlyphs" stroke="#f4f4f4" stroke-width=".3">0,0000</text>
<text x="697.3" y="531.2" font-size="12.5" fill="#f4f4f4" textLength="72.0" lengthAdjust="spacingAndGlyphs" stroke="#f4f4f4" stroke-width=".3">119,8749</text>
<rect x="754.2" y="8.3" width="540.0" height="380.8" fill="#000"/>
<rect x="759.9" y="12.8" width="540.0" height="371.6" fill="#353535"/>
<rect x="782.0" y="28.8" width="520.0" height="335.9" fill="#232323"/>
<text x="1023.0" y="25.2" font-size="10.6" text-anchor="middle" textLength="60.0" lengthAdjust="spacingAndGlyphs">CIE 1931 xy</text>
<g clip-path="url(#locus)"><rect x="782.0" y="30.0" width="442.0" height="3.6" fill="url(#o0)"/><rect x="782.0" y="33.0" width="442.0" height="3.6" fill="url(#o1)"/><rect x="782.0" y="36.0" width="442.0" height="3.6" fill="url(#o2)"/><rect x="782.0" y="39.0" width="442.0" height="3.6" fill="url(#o3)"/><rect x="782.0" y="42.0" width="442.0" height="3.6" fill="url(#o4)"/><rect x="782.0" y="45.0" width="442.0" height="3.6" fill="url(#o5)"/><rect x="782.0" y="48.0" width="442.0" height="3.6" fill="url(#o6)"/><rect x="782.0" y="51.0" width="442.0" height="3.6" fill="url(#o7)"/><rect x="782.0" y="54.0" width="442.0" height="3.6" fill="url(#o8)"/><rect x="782.0" y="57.0" width="442.0" height="3.6" fill="url(#o9)"/><rect x="782.0" y="60.0" width="442.0" height="3.6" fill="url(#o10)"/><rect x="782.0" y="63.0" width="442.0" height="3.6" fill="url(#o11)"/><rect x="782.0" y="66.0" width="442.0" height="3.6" fill="url(#o12)"/><rect x="782.0" y="69.0" width="442.0" height="3.6" fill="url(#o13)"/><rect x="782.0" y="72.0" width="442.0" height="3.6" fill="url(#o14)"/><rect x="782.0" y="75.0" width="442.0" height="3.6" fill="url(#o15)"/><rect x="782.0" y="78.0" width="442.0" height="3.6" fill="url(#o16)"/><rect x="782.0" y="81.0" width="442.0" height="3.6" fill="url(#o17)"/><rect x="782.0" y="84.0" width="442.0" height="3.6" fill="url(#o18)"/><rect x="782.0" y="87.0" width="442.0" height="3.6" fill="url(#o19)"/><rect x="782.0" y="90.0" width="442.0" height="3.6" fill="url(#o20)"/><rect x="782.0" y="93.0" width="442.0" height="3.6" fill="url(#o21)"/><rect x="782.0" y="96.0" width="442.0" height="3.6" fill="url(#o22)"/><rect x="782.0" y="99.0" width="442.0" height="3.6" fill="url(#o23)"/><rect x="782.0" y="102.0" width="442.0" height="3.6" fill="url(#o24)"/><rect x="782.0" y="105.0" width="442.0" height="3.6" fill="url(#o25)"/><rect x="782.0" y="108.0" width="442.0" height="3.6" fill="url(#o26)"/><rect x="782.0" y="111.0" width="442.0" height="3.6" fill="url(#o27)"/><rect x="782.0" y="114.0" width="442.0" height="3.6" fill="url(#o28)"/><rect x="782.0" y="117.0" width="442.0" height="3.6" fill="url(#o29)"/><rect x="782.0" y="120.0" width="442.0" height="3.6" fill="url(#o30)"/><rect x="782.0" y="123.0" width="442.0" height="3.6" fill="url(#o31)"/><rect x="782.0" y="126.0" width="442.0" height="3.6" fill="url(#o32)"/><rect x="782.0" y="129.0" width="442.0" height="3.6" fill="url(#o33)"/><rect x="782.0" y="132.0" width="442.0" height="3.6" fill="url(#o34)"/><rect x="782.0" y="135.0" width="442.0" height="3.6" fill="url(#o35)"/><rect x="782.0" y="138.0" width="442.0" height="3.6" fill="url(#o36)"/><rect x="782.0" y="141.0" width="442.0" height="3.6" fill="url(#o37)"/><rect x="782.0" y="144.0" width="442.0" height="3.6" fill="url(#o38)"/><rect x="782.0" y="147.0" width="442.0" height="3.6" fill="url(#o39)"/><rect x="782.0" y="150.0" width="442.0" height="3.6" fill="url(#o40)"/><rect x="782.0" y="153.0" width="442.0" height="3.6" fill="url(#o41)"/><rect x="782.0" y="156.0" width="442.0" height="3.6" fill="url(#o42)"/><rect x="782.0" y="159.0" width="442.0" height="3.6" fill="url(#o43)"/><rect x="782.0" y="162.0" width="442.0" height="3.6" fill="url(#o44)"/><rect x="782.0" y="165.0" width="442.0" height="3.6" fill="url(#o45)"/><rect x="782.0" y="168.0" width="442.0" height="3.6" fill="url(#o46)"/><rect x="782.0" y="171.0" width="442.0" height="3.6" fill="url(#o47)"/><rect x="782.0" y="174.0" width="442.0" height="3.6" fill="url(#o48)"/><rect x="782.0" y="177.0" width="442.0" height="3.6" fill="url(#o49)"/><rect x="782.0" y="180.0" width="442.0" height="3.6" fill="url(#o50)"/><rect x="782.0" y="183.0" width="442.0" height="3.6" fill="url(#o51)"/><rect x="782.0" y="186.0" width="442.0" height="3.6" fill="url(#o52)"/><rect x="782.0" y="189.0" width="442.0" height="3.6" fill="url(#o53)"/><rect x="782.0" y="192.0" width="442.0" height="3.6" fill="url(#o54)"/><rect x="782.0" y="195.0" width="442.0" height="3.6" fill="url(#o55)"/><rect x="782.0" y="198.0" width="442.0" height="3.6" fill="url(#o56)"/><rect x="782.0" y="201.0" width="442.0" height="3.6" fill="url(#o57)"/><rect x="782.0" y="204.0" width="442.0" height="3.6" fill="url(#o58)"/><rect x="782.0" y="207.0" width="442.0" height="3.6" fill="url(#o59)"/><rect x="782.0" y="210.0" width="442.0" height="3.6" fill="url(#o60)"/><rect x="782.0" y="213.0" width="442.0" height="3.6" fill="url(#o61)"/><rect x="782.0" y="216.0" width="442.0" height="3.6" fill="url(#o62)"/><rect x="782.0" y="219.0" width="442.0" height="3.6" fill="url(#o63)"/><rect x="782.0" y="222.0" width="442.0" height="3.6" fill="url(#o64)"/><rect x="782.0" y="225.0" width="442.0" height="3.6" fill="url(#o65)"/><rect x="782.0" y="228.0" width="442.0" height="3.6" fill="url(#o66)"/><rect x="782.0" y="231.0" width="442.0" height="3.6" fill="url(#o67)"/><rect x="782.0" y="234.0" width="442.0" height="3.6" fill="url(#o68)"/><rect x="782.0" y="237.0" width="442.0" height="3.6" fill="url(#o69)"/><rect x="782.0" y="240.0" width="442.0" height="3.6" fill="url(#o70)"/><rect x="782.0" y="243.0" width="442.0" height="3.6" fill="url(#o71)"/><rect x="782.0" y="246.0" width="442.0" height="3.6" fill="url(#o72)"/><rect x="782.0" y="249.0" width="442.0" height="3.6" fill="url(#o73)"/><rect x="782.0" y="252.0" width="442.0" height="3.6" fill="url(#o74)"/><rect x="782.0" y="255.0" width="442.0" height="3.6" fill="url(#o75)"/><rect x="782.0" y="258.0" width="442.0" height="3.6" fill="url(#o76)"/><rect x="782.0" y="261.0" width="442.0" height="3.6" fill="url(#o77)"/><rect x="782.0" y="264.0" width="442.0" height="3.6" fill="url(#o78)"/><rect x="782.0" y="267.0" width="442.0" height="3.6" fill="url(#o79)"/><rect x="782.0" y="270.0" width="442.0" height="3.6" fill="url(#o80)"/><rect x="782.0" y="273.0" width="442.0" height="3.6" fill="url(#o81)"/><rect x="782.0" y="276.0" width="442.0" height="3.6" fill="url(#o82)"/><rect x="782.0" y="279.0" width="442.0" height="3.6" fill="url(#o83)"/><rect x="782.0" y="282.0" width="442.0" height="3.6" fill="url(#o84)"/><rect x="782.0" y="285.0" width="442.0" height="3.6" fill="url(#o85)"/><rect x="782.0" y="288.0" width="442.0" height="3.6" fill="url(#o86)"/><rect x="782.0" y="291.0" width="442.0" height="3.6" fill="url(#o87)"/><rect x="782.0" y="294.0" width="442.0" height="3.6" fill="url(#o88)"/><rect x="782.0" y="297.0" width="442.0" height="3.6" fill="url(#o89)"/><rect x="782.0" y="300.0" width="442.0" height="3.6" fill="url(#o90)"/><rect x="782.0" y="303.0" width="442.0" height="3.6" fill="url(#o91)"/><rect x="782.0" y="306.0" width="442.0" height="3.6" fill="url(#o92)"/><rect x="782.0" y="309.0" width="442.0" height="3.6" fill="url(#o93)"/><rect x="782.0" y="312.0" width="442.0" height="3.6" fill="url(#o94)"/><rect x="782.0" y="315.0" width="442.0" height="3.6" fill="url(#o95)"/><rect x="782.0" y="318.0" width="442.0" height="3.6" fill="url(#o96)"/><rect x="782.0" y="321.0" width="442.0" height="3.6" fill="url(#o97)"/><rect x="782.0" y="324.0" width="442.0" height="3.6" fill="url(#o98)"/><rect x="782.0" y="327.0" width="442.0" height="3.6" fill="url(#o99)"/><rect x="782.0" y="330.0" width="442.0" height="3.6" fill="url(#o100)"/><rect x="782.0" y="333.0" width="442.0" height="3.6" fill="url(#o101)"/><rect x="782.0" y="336.0" width="442.0" height="3.6" fill="url(#o102)"/><rect x="782.0" y="339.0" width="442.0" height="3.6" fill="url(#o103)"/><rect x="782.0" y="342.0" width="442.0" height="3.6" fill="url(#o104)"/><rect x="782.0" y="345.0" width="442.0" height="3.6" fill="url(#o105)"/><rect x="782.0" y="348.0" width="442.0" height="3.6" fill="url(#o106)"/><rect x="782.0" y="351.0" width="442.0" height="3.6" fill="url(#o107)"/><rect x="782.0" y="354.0" width="442.0" height="3.6" fill="url(#o108)"/><rect x="782.0" y="357.0" width="442.0" height="3.6" fill="url(#o109)"/><rect x="782.0" y="360.0" width="442.0" height="3.6" fill="url(#o110)"/><rect x="782.0" y="363.0" width="442.0" height="3.6" fill="url(#o111)"/></g><g clip-path="url(#tri)"><rect x="868.0" y="122.0" width="300.0" height="2.6" fill="url(#i0)"/><rect x="868.0" y="124.0" width="300.0" height="2.6" fill="url(#i1)"/><rect x="868.0" y="126.0" width="300.0" height="2.6" fill="url(#i2)"/><rect x="868.0" y="128.0" width="300.0" height="2.6" fill="url(#i3)"/><rect x="868.0" y="130.0" width="300.0" height="2.6" fill="url(#i4)"/><rect x="868.0" y="132.0" width="300.0" height="2.6" fill="url(#i5)"/><rect x="868.0" y="134.0" width="300.0" height="2.6" fill="url(#i6)"/><rect x="868.0" y="136.0" width="300.0" height="2.6" fill="url(#i7)"/><rect x="868.0" y="138.0" width="300.0" height="2.6" fill="url(#i8)"/><rect x="868.0" y="140.0" width="300.0" height="2.6" fill="url(#i9)"/><rect x="868.0" y="142.0" width="300.0" height="2.6" fill="url(#i10)"/><rect x="868.0" y="144.0" width="300.0" height="2.6" fill="url(#i11)"/><rect x="868.0" y="146.0" width="300.0" height="2.6" fill="url(#i12)"/><rect x="868.0" y="148.0" width="300.0" height="2.6" fill="url(#i13)"/><rect x="868.0" y="150.0" width="300.0" height="2.6" fill="url(#i14)"/><rect x="868.0" y="152.0" width="300.0" height="2.6" fill="url(#i15)"/><rect x="868.0" y="154.0" width="300.0" height="2.6" fill="url(#i16)"/><rect x="868.0" y="156.0" width="300.0" height="2.6" fill="url(#i17)"/><rect x="868.0" y="158.0" width="300.0" height="2.6" fill="url(#i18)"/><rect x="868.0" y="160.0" width="300.0" height="2.6" fill="url(#i19)"/><rect x="868.0" y="162.0" width="300.0" height="2.6" fill="url(#i20)"/><rect x="868.0" y="164.0" width="300.0" height="2.6" fill="url(#i21)"/><rect x="868.0" y="166.0" width="300.0" height="2.6" fill="url(#i22)"/><rect x="868.0" y="168.0" width="300.0" height="2.6" fill="url(#i23)"/><rect x="868.0" y="170.0" width="300.0" height="2.6" fill="url(#i24)"/><rect x="868.0" y="172.0" width="300.0" height="2.6" fill="url(#i25)"/><rect x="868.0" y="174.0" width="300.0" height="2.6" fill="url(#i26)"/><rect x="868.0" y="176.0" width="300.0" height="2.6" fill="url(#i27)"/><rect x="868.0" y="178.0" width="300.0" height="2.6" fill="url(#i28)"/><rect x="868.0" y="180.0" width="300.0" height="2.6" fill="url(#i29)"/><rect x="868.0" y="182.0" width="300.0" height="2.6" fill="url(#i30)"/><rect x="868.0" y="184.0" width="300.0" height="2.6" fill="url(#i31)"/><rect x="868.0" y="186.0" width="300.0" height="2.6" fill="url(#i32)"/><rect x="868.0" y="188.0" width="300.0" height="2.6" fill="url(#i33)"/><rect x="868.0" y="190.0" width="300.0" height="2.6" fill="url(#i34)"/><rect x="868.0" y="192.0" width="300.0" height="2.6" fill="url(#i35)"/><rect x="868.0" y="194.0" width="300.0" height="2.6" fill="url(#i36)"/><rect x="868.0" y="196.0" width="300.0" height="2.6" fill="url(#i37)"/><rect x="868.0" y="198.0" width="300.0" height="2.6" fill="url(#i38)"/><rect x="868.0" y="200.0" width="300.0" height="2.6" fill="url(#i39)"/><rect x="868.0" y="202.0" width="300.0" height="2.6" fill="url(#i40)"/><rect x="868.0" y="204.0" width="300.0" height="2.6" fill="url(#i41)"/><rect x="868.0" y="206.0" width="300.0" height="2.6" fill="url(#i42)"/><rect x="868.0" y="208.0" width="300.0" height="2.6" fill="url(#i43)"/><rect x="868.0" y="210.0" width="300.0" height="2.6" fill="url(#i44)"/><rect x="868.0" y="212.0" width="300.0" height="2.6" fill="url(#i45)"/><rect x="868.0" y="214.0" width="300.0" height="2.6" fill="url(#i46)"/><rect x="868.0" y="216.0" width="300.0" height="2.6" fill="url(#i47)"/><rect x="868.0" y="218.0" width="300.0" height="2.6" fill="url(#i48)"/><rect x="868.0" y="220.0" width="300.0" height="2.6" fill="url(#i49)"/><rect x="868.0" y="222.0" width="300.0" height="2.6" fill="url(#i50)"/><rect x="868.0" y="224.0" width="300.0" height="2.6" fill="url(#i51)"/><rect x="868.0" y="226.0" width="300.0" height="2.6" fill="url(#i52)"/><rect x="868.0" y="228.0" width="300.0" height="2.6" fill="url(#i53)"/><rect x="868.0" y="230.0" width="300.0" height="2.6" fill="url(#i54)"/><rect x="868.0" y="232.0" width="300.0" height="2.6" fill="url(#i55)"/><rect x="868.0" y="234.0" width="300.0" height="2.6" fill="url(#i56)"/><rect x="868.0" y="236.0" width="300.0" height="2.6" fill="url(#i57)"/><rect x="868.0" y="238.0" width="300.0" height="2.6" fill="url(#i58)"/><rect x="868.0" y="240.0" width="300.0" height="2.6" fill="url(#i59)"/><rect x="868.0" y="242.0" width="300.0" height="2.6" fill="url(#i60)"/><rect x="868.0" y="244.0" width="300.0" height="2.6" fill="url(#i61)"/><rect x="868.0" y="246.0" width="300.0" height="2.6" fill="url(#i62)"/><rect x="868.0" y="248.0" width="300.0" height="2.6" fill="url(#i63)"/><rect x="868.0" y="250.0" width="300.0" height="2.6" fill="url(#i64)"/><rect x="868.0" y="252.0" width="300.0" height="2.6" fill="url(#i65)"/><rect x="868.0" y="254.0" width="300.0" height="2.6" fill="url(#i66)"/><rect x="868.0" y="256.0" width="300.0" height="2.6" fill="url(#i67)"/><rect x="868.0" y="258.0" width="300.0" height="2.6" fill="url(#i68)"/><rect x="868.0" y="260.0" width="300.0" height="2.6" fill="url(#i69)"/><rect x="868.0" y="262.0" width="300.0" height="2.6" fill="url(#i70)"/><rect x="868.0" y="264.0" width="300.0" height="2.6" fill="url(#i71)"/><rect x="868.0" y="266.0" width="300.0" height="2.6" fill="url(#i72)"/><rect x="868.0" y="268.0" width="300.0" height="2.6" fill="url(#i73)"/><rect x="868.0" y="270.0" width="300.0" height="2.6" fill="url(#i74)"/><rect x="868.0" y="272.0" width="300.0" height="2.6" fill="url(#i75)"/><rect x="868.0" y="274.0" width="300.0" height="2.6" fill="url(#i76)"/><rect x="868.0" y="276.0" width="300.0" height="2.6" fill="url(#i77)"/><rect x="868.0" y="278.0" width="300.0" height="2.6" fill="url(#i78)"/><rect x="868.0" y="280.0" width="300.0" height="2.6" fill="url(#i79)"/><rect x="868.0" y="282.0" width="300.0" height="2.6" fill="url(#i80)"/><rect x="868.0" y="284.0" width="300.0" height="2.6" fill="url(#i81)"/><rect x="868.0" y="286.0" width="300.0" height="2.6" fill="url(#i82)"/><rect x="868.0" y="288.0" width="300.0" height="2.6" fill="url(#i83)"/><rect x="868.0" y="290.0" width="300.0" height="2.6" fill="url(#i84)"/><rect x="868.0" y="292.0" width="300.0" height="2.6" fill="url(#i85)"/><rect x="868.0" y="294.0" width="300.0" height="2.6" fill="url(#i86)"/><rect x="868.0" y="296.0" width="300.0" height="2.6" fill="url(#i87)"/><rect x="868.0" y="298.0" width="300.0" height="2.6" fill="url(#i88)"/><rect x="868.0" y="300.0" width="300.0" height="2.6" fill="url(#i89)"/><rect x="868.0" y="302.0" width="300.0" height="2.6" fill="url(#i90)"/><rect x="868.0" y="304.0" width="300.0" height="2.6" fill="url(#i91)"/><rect x="868.0" y="306.0" width="300.0" height="2.6" fill="url(#i92)"/><rect x="868.0" y="308.0" width="300.0" height="2.6" fill="url(#i93)"/><rect x="868.0" y="310.0" width="300.0" height="2.6" fill="url(#i94)"/><rect x="868.0" y="312.0" width="300.0" height="2.6" fill="url(#i95)"/><rect x="868.0" y="314.0" width="300.0" height="2.6" fill="url(#i96)"/><rect x="868.0" y="316.0" width="300.0" height="2.6" fill="url(#i97)"/><rect x="868.0" y="318.0" width="300.0" height="2.6" fill="url(#i98)"/><rect x="868.0" y="320.0" width="300.0" height="2.6" fill="url(#i99)"/><rect x="868.0" y="322.0" width="300.0" height="2.6" fill="url(#i100)"/><rect x="868.0" y="324.0" width="300.0" height="2.6" fill="url(#i101)"/><rect x="868.0" y="326.0" width="300.0" height="2.6" fill="url(#i102)"/><rect x="868.0" y="328.0" width="300.0" height="2.6" fill="url(#i103)"/><rect x="868.0" y="330.0" width="300.0" height="2.6" fill="url(#i104)"/><rect x="868.0" y="332.0" width="300.0" height="2.6" fill="url(#i105)"/><rect x="868.0" y="334.0" width="300.0" height="2.6" fill="url(#i106)"/><rect x="868.0" y="336.0" width="300.0" height="2.6" fill="url(#i107)"/><rect x="868.0" y="338.0" width="300.0" height="2.6" fill="url(#i108)"/><rect x="868.0" y="340.0" width="300.0" height="2.6" fill="url(#i109)"/><rect x="868.0" y="342.0" width="300.0" height="2.6" fill="url(#i110)"/></g>
<path d="M782.0 368.2V28.8H1290M778.0 364.7H1290M778.5 324.8H782.0M841.8 364.7V368.2M778.5 285.0H782.0M901.5 364.7V368.2M778.5 245.1H782.0M961.3 364.7V368.2M778.5 205.3H782.0M1021.1 364.7V368.2M778.5 165.4H782.0M1080.9 364.7V368.2M778.5 125.5H782.0M1140.7 364.7V368.2M778.5 85.7H782.0M1200.4 364.7V368.2M778.5 45.8H782.0M1260.2 364.7V368.2" stroke="#b8b8b8" fill="none"/>
<text x="777.4" y="368.7" font-size="11.2" text-anchor="end">0</text>
<text x="782.0" y="380.3" font-size="11.2" text-anchor="middle">0</text>
<text x="777.4" y="328.8" font-size="11.2" text-anchor="end">0,1</text>
<text x="841.8" y="380.3" font-size="11.2" text-anchor="middle">0,1</text>
<text x="777.4" y="289.0" font-size="11.2" text-anchor="end">0,2</text>
<text x="901.5" y="380.3" font-size="11.2" text-anchor="middle">0,2</text>
<text x="777.4" y="249.1" font-size="11.2" text-anchor="end">0,3</text>
<text x="961.3" y="380.3" font-size="11.2" text-anchor="middle">0,3</text>
<text x="777.4" y="209.3" font-size="11.2" text-anchor="end">0,4</text>
<text x="1021.1" y="380.3" font-size="11.2" text-anchor="middle">0,4</text>
<text x="777.4" y="169.4" font-size="11.2" text-anchor="end">0,5</text>
<text x="1080.9" y="380.3" font-size="11.2" text-anchor="middle">0,5</text>
<text x="777.4" y="129.5" font-size="11.2" text-anchor="end">0,6</text>
<text x="1140.7" y="380.3" font-size="11.2" text-anchor="middle">0,6</text>
<text x="777.4" y="89.7" font-size="11.2" text-anchor="end">0,7</text>
<text x="1200.4" y="380.3" font-size="11.2" text-anchor="middle">0,7</text>
<text x="777.4" y="49.8" font-size="11.2" text-anchor="end">0,8</text>
<text x="1260.2" y="380.3" font-size="11.2" text-anchor="middle">0,8</text>
<g clip-path="url(#insc)"><rect x="1109.9" y="33.4" width="169.5" height="3.6" fill="url(#n0)"/><rect x="1109.9" y="36.4" width="169.5" height="3.6" fill="url(#n1)"/><rect x="1109.9" y="39.4" width="169.5" height="3.6" fill="url(#n2)"/><rect x="1109.9" y="42.4" width="169.5" height="3.6" fill="url(#n3)"/><rect x="1109.9" y="45.4" width="169.5" height="3.6" fill="url(#n4)"/><rect x="1109.9" y="48.4" width="169.5" height="3.6" fill="url(#n5)"/><rect x="1109.9" y="51.4" width="169.5" height="3.6" fill="url(#n6)"/><rect x="1109.9" y="54.4" width="169.5" height="3.6" fill="url(#n7)"/><rect x="1109.9" y="57.4" width="169.5" height="3.6" fill="url(#n8)"/><rect x="1109.9" y="60.4" width="169.5" height="3.6" fill="url(#n9)"/><rect x="1109.9" y="63.4" width="169.5" height="3.6" fill="url(#n10)"/><rect x="1109.9" y="66.4" width="169.5" height="3.6" fill="url(#n11)"/><rect x="1109.9" y="69.4" width="169.5" height="3.6" fill="url(#n12)"/><rect x="1109.9" y="72.4" width="169.5" height="3.6" fill="url(#n13)"/><rect x="1109.9" y="75.4" width="169.5" height="3.6" fill="url(#n14)"/><rect x="1109.9" y="78.4" width="169.5" height="3.6" fill="url(#n15)"/><rect x="1109.9" y="81.4" width="169.5" height="3.6" fill="url(#n16)"/><rect x="1109.9" y="84.4" width="169.5" height="3.6" fill="url(#n17)"/><rect x="1109.9" y="87.4" width="169.5" height="3.6" fill="url(#n18)"/><rect x="1109.9" y="90.4" width="169.5" height="3.6" fill="url(#n19)"/><rect x="1109.9" y="93.4" width="169.5" height="3.6" fill="url(#n20)"/><rect x="1109.9" y="96.4" width="169.5" height="3.6" fill="url(#n21)"/><rect x="1109.9" y="99.4" width="169.5" height="3.6" fill="url(#n22)"/><rect x="1109.9" y="102.4" width="169.5" height="3.6" fill="url(#n23)"/><rect x="1109.9" y="105.4" width="169.5" height="3.6" fill="url(#n24)"/><rect x="1109.9" y="108.4" width="169.5" height="3.6" fill="url(#n25)"/><rect x="1109.9" y="111.4" width="169.5" height="3.6" fill="url(#n26)"/><rect x="1109.9" y="114.4" width="169.5" height="3.6" fill="url(#n27)"/><rect x="1109.9" y="117.4" width="169.5" height="3.6" fill="url(#n28)"/><rect x="1109.9" y="120.4" width="169.5" height="3.6" fill="url(#n29)"/><rect x="1109.9" y="123.4" width="169.5" height="3.6" fill="url(#n30)"/><rect x="1109.9" y="126.4" width="169.5" height="3.6" fill="url(#n31)"/><rect x="1109.9" y="129.4" width="169.5" height="3.6" fill="url(#n32)"/><rect x="1109.9" y="132.4" width="169.5" height="3.6" fill="url(#n33)"/><rect x="1109.9" y="135.4" width="169.5" height="3.6" fill="url(#n34)"/><rect x="1109.9" y="138.4" width="169.5" height="3.6" fill="url(#n35)"/><rect x="1109.9" y="141.4" width="169.5" height="3.6" fill="url(#n36)"/><rect x="1109.9" y="144.4" width="169.5" height="3.6" fill="url(#n37)"/><rect x="1109.9" y="147.4" width="169.5" height="3.6" fill="url(#n38)"/><rect x="1109.9" y="150.4" width="169.5" height="3.6" fill="url(#n39)"/><rect x="1109.9" y="153.4" width="169.5" height="3.6" fill="url(#n40)"/><rect x="1109.9" y="156.4" width="169.5" height="3.6" fill="url(#n41)"/><rect x="1109.9" y="159.4" width="169.5" height="3.6" fill="url(#n42)"/></g>
<rect x="1189.3" y="91.9" width="10.2" height="8.8" fill="none" stroke="#000" stroke-width="1.4"/>
<circle cx="1183.9" cy="101.8" r="3" fill="none" stroke="#222" stroke-width="1"/>
<rect x="1110" y="92.2" width="9" height="9" fill="none" stroke="#fff" stroke-opacity=".45" stroke-width="1"/>
<ellipse cx="1282" cy="203.5" rx="3.800" ry="10" fill="#fff"/>
<path d="M1158.7 227.6h11.2v9.6h-11.2zM954.6 119.8h11.2v9.6h-11.2zM865.1 334.7h11.2v9.6h-11.2zM910.0 228.0h11.2v9.6h-11.2zM967.5 298.2h11.2v9.6h-11.2zM1027.4 156.0h11.2v9.6h-11.2z" fill="none" stroke="#fff" stroke-width="1.2"/>
<path d="M1018.2 228.2h11.2v9.6h-11.2zM1068.0 228.0h11.2v9.6h-11.2zM1117.7 227.8h11.2v9.6h-11.2zM936.0 258.2h11.2v9.6h-11.2zM910.9 285.3h11.2v9.6h-11.2zM885.8 312.4h11.2v9.6h-11.2zM964.7 247.9h11.2v9.6h-11.2zM965.7 265.7h11.2v9.6h-11.2zM966.7 283.5h11.2v9.6h-11.2z" fill="none" stroke="#fff" stroke-width="1.1" stroke-opacity=".8"/>
<path d="M961.1 198.0h11.2v9.6h-11.2zM958.8 170.3h11.2v9.6h-11.2zM956.5 142.6h11.2v9.6h-11.2zM948.6 228.3h11.2v9.6h-11.2zM934.9 228.2h11.2v9.6h-11.2zM921.3 228.1h11.2v9.6h-11.2zM981.5 208.1h11.2v9.6h-11.2zM997.7 189.7h11.2v9.6h-11.2zM1014.0 171.2h11.2v9.6h-11.2z" fill="none" stroke="#fff" stroke-width="1" stroke-opacity=".4"/>
<rect x="964" y="228.7" width="10.4" height="9.2" fill="none" stroke="#000" stroke-width="1.5"/>
<circle cx="963.2" cy="147.7" r="3.15" fill="#102" fill-opacity="0" stroke="#111" stroke-opacity=".88" stroke-width="1.2"/>
<circle cx="963.5" cy="177.6" r="3.15" fill="#102" fill-opacity="0" stroke="#111" stroke-opacity=".88" stroke-width="1.2"/>
<circle cx="967.4" cy="202.4" r="3.15" fill="#102" fill-opacity="0" stroke="#111" stroke-opacity=".88" stroke-width="1.2"/>
<circle cx="1035.5" cy="161.3" r="3.15" fill="#102" fill-opacity="0" stroke="#111" stroke-opacity=".88" stroke-width="1.2"/>
<circle cx="1018.5" cy="178.3" r="3.15" fill="#102" fill-opacity="0" stroke="#111" stroke-opacity=".88" stroke-width="1.2"/>
<circle cx="1000.5" cy="197.6" r="3.15" fill="#102" fill-opacity="0" stroke="#111" stroke-opacity=".88" stroke-width="1.2"/>
<circle cx="984.9" cy="213.4" r="3.15" fill="#102" fill-opacity="0" stroke="#111" stroke-opacity=".88" stroke-width="1.2"/>
<circle cx="917.8" cy="231.4" r="3.15" fill="#102" fill-opacity="0" stroke="#111" stroke-opacity=".88" stroke-width="1.2"/>
<circle cx="928.2" cy="232.8" r="3.15" fill="#102" fill-opacity="0" stroke="#111" stroke-opacity=".88" stroke-width="1.2"/>
<circle cx="939.9" cy="233.6" r="3.15" fill="#102" fill-opacity="0" stroke="#111" stroke-opacity=".88" stroke-width="1.2"/>
<circle cx="951.8" cy="234.3" r="3.15" fill="#102" fill-opacity="0" stroke="#111" stroke-opacity=".88" stroke-width="1.2"/>
<circle cx="1025.5" cy="231.6" r="3.15" fill="#102" fill-opacity="0.25" stroke="#111" stroke-opacity=".88" stroke-width="1.2"/>
<circle cx="1076.7" cy="231.6" r="3.15" fill="#102" fill-opacity="0.25" stroke="#111" stroke-opacity=".88" stroke-width="1.2"/>
<circle cx="939.8" cy="264.3" r="3.15" fill="#102" fill-opacity="0.55" stroke="#111" stroke-opacity=".88" stroke-width="1.2"/>
<circle cx="916.7" cy="290.0" r="3.15" fill="#102" fill-opacity="0.45" stroke="#111" stroke-opacity=".88" stroke-width="1.2"/>
<circle cx="968.5" cy="253.3" r="3.15" fill="#102" fill-opacity="0.3" stroke="#111" stroke-opacity=".88" stroke-width="1.2"/>
<circle cx="970.7" cy="271.6" r="3.15" fill="#102" fill-opacity="0.3" stroke="#111" stroke-opacity=".88" stroke-width="1.2"/>
<circle cx="971.9" cy="287.4" r="3.15" fill="#102" fill-opacity="0.3" stroke="#111" stroke-opacity=".88" stroke-width="1.2"/>
<circle cx="1123.800" cy="232.600" r="2.200" fill="none" stroke="#6c0c14" stroke-width="1.100"/><circle cx="1164.600" cy="232.600" r="2" fill="none" stroke="#b01818" stroke-width="1"/>
<circle cx="967.600" cy="122.400" r="2.200" fill="none" stroke="#0c2c0c" stroke-width="1.100"/><circle cx="984.800" cy="299.100" r="2.400" fill="#300830" fill-opacity=".25" stroke="#4c0c50" stroke-width="1.100"/><circle cx="892.100" cy="317.300" r="2.600" fill="#081040" fill-opacity=".35" stroke="#0a1040" stroke-opacity=".7" stroke-width="1.100"/>
<circle cx="967.8" cy="233.3" r="2.9" fill="none" stroke="#111" stroke-width="1.1"/>
<rect x="0.0" y="555.6" width="1280.0" height="59.8" fill="url(#bar)"/>
<rect x="0" y="556" width="42" height="58" rx="3" fill="url(#btn)"/>
<rect x="5" y="581.6" width="33" height="27.6" rx="1.5" fill="#fff"/>
<circle cx="21.5" cy="563.2" r="5.6" fill="#6e6e6e"/><path d="M17.5 565.4L21.5 560.6L25.5 565.4z" fill="#2a2a2a"/>
<rect x="46.5" y="556.6" width="144.5" height="58" rx="3" fill="url(#swc)"/>
<rect x="52.9" y="560.2" width="132.7" height="34.6" rx="2.5" fill="#000"/>
<text x="119.0" y="609.3" font-size="8.6" text-anchor="middle" fill="#fff" font-weight="bold">0</text>
<rect x="192.6" y="556.6" width="142.4" height="58" rx="3" fill="url(#sel)"/>
<rect x="196.9" y="561" width="132.7" height="34" rx="2.5" fill="#fff"/>
<text x="263.5" y="609.3" font-size="8.6" text-anchor="middle" fill="#484848">100</text>
<rect x="985.5" y="555.0" width="300.0" height="60.0" fill="#2a2a2a"/>
<rect x="987" y="555.8" width="45.7" height="17.4" rx="2" fill="url(#btnt)"/>
<rect x="987" y="574" width="45.7" height="40.4" rx="1" fill="url(#btnb)"/>
<circle cx="1010" cy="563.4" r="5.6" fill="url(#emb)"/><path d="M1006 565.6L1010 560.8L1014 565.6z" fill="#3c3c3c"/>
<rect x="996.4" y="580.4" width="26.8" height="26.6" rx="3" fill="#bdbdbd" stroke="#141414" stroke-width="1.9"/>
<rect x="1003.4" y="588" width="13.2" height="12.8" fill="#000"/>
<rect x="1034.6" y="555.8" width="41.8" height="28.6" fill="url(#btn2)"/>
<circle cx="1055.5" cy="570.8" r="8.8" fill="url(#emb)"/>
<rect x="1077.6" y="555.8" width="41.8" height="28.6" fill="url(#btn2)"/>
<circle cx="1098.5" cy="570.8" r="8.8" fill="url(#emb)"/>
<rect x="1120.6" y="555.8" width="41.3" height="28.6" fill="url(#btn2)"/>
<circle cx="1141.2" cy="570.8" r="8.8" fill="url(#emb)"/>
<rect x="1163.1" y="555.8" width="41.899999999999906" height="28.6" fill="url(#btn2)"/>
<circle cx="1184.0" cy="570.8" r="8.8" fill="url(#emb)"/>
<rect x="1206.1999999999998" y="555.8" width="41.20000000000009" height="28.6" fill="url(#btn2)"/>
<circle cx="1226.8" cy="570.8" r="8.8" fill="url(#emb)"/>
<rect x="1051.7" y="567.2" width="7.8" height="7.2" fill="#363636"/>
<path d="M1096 566.8L1103.800 571.200L1096 575.600z" fill="#2c2c2c"/>
<path d="M1138 566.200v9M1145.200 566.200v9M1138 570.700h7.200M1136 566.200h3M1136 575.200h3M1144.200 566.200h3M1144.200 575.200h3" stroke="#343434" stroke-width="1.800" fill="none"/>
<path d="M1184 570.600c-2-3.400-6.400-3.400-6.400 0s4.400 3.400 6.400 0s6.400-3.400 6.400 0s-4.400 3.400-6.400 0z" stroke="#343434" stroke-width="1.900" fill="none"/>
<path d="M1222.300 569.300a4.800 4.400 0 0 1 8.600-1.500M1231.500 572.300a4.800 4.400 0 0 1-8.600 1.500" stroke="#343434" stroke-width="2.300" fill="none"/>
<path d="M1229.300 565.200l2.600 3.400l-4.200 .4zM1224.500 576.400l-2.600-3.400l4.200-.4z" fill="#343434"/>
<rect x="1248.6" y="555.8" width="32.0" height="28.8" fill="#2c2c2c"/>
<circle cx="1270" cy="570.8" r="9" fill="#3b3b3b"/>
<rect x="1034.400" y="585.700" width="127.800" height="28.700" fill="url(#btnw)"/>
<rect x="1163.400" y="585.700" width="118" height="28.700" fill="url(#btnw)"/>
<circle cx="1063" cy="599.800" r="8.600" fill="url(#emb)"/><circle cx="1265" cy="600.200" r="8.600" fill="url(#emb)"/>
<path d="M1062.300 595.400l-3.800 4.400l3.800 4.400M1067 595.400l-3.800 4.400l3.800 4.400" stroke="#3c3c3c" stroke-width="1.700" fill="none"/>
<path d="M1261.300 595.800l3.800 4.400l-3.800 4.400M1266 595.800l3.800 4.400l-3.800 4.400" stroke="#3c3c3c" stroke-width="1.700" fill="none"/>
<text x="1088.6" y="607.5" font-size="20.4" fill="#303030" textLength="48.2" lengthAdjust="spacingAndGlyphs" stroke="#303030" stroke-width=".3">Back</text>
<text x="1189.4" y="607.5" font-size="20.4" fill="#303030" textLength="49.4" lengthAdjust="spacingAndGlyphs" stroke="#303030" stroke-width=".3">Next</text>
<rect x="0.0" y="615.3" width="1280.0" height="2.0" fill="#e8ecf0"/>
<rect x="0.0" y="615.3" width="143.7" height="2.0" fill="#3c5670"/>
<rect x="290.6" y="615.3" width="49.0" height="2.0" fill="#3c5670"/>
<rect x="946.0" y="615.3" width="340.0" height="2.0" fill="#33587a"/>
<rect x="490.0" y="615.3" width="2.5" height="2.0" fill="#555"/>
<rect x="641.0" y="615.3" width="2.5" height="2.0" fill="#555"/>
<rect x="794.0" y="615.3" width="2.5" height="2.0" fill="#555"/>
<ellipse cx="25" cy="618.2" rx="12.5" ry="6.8" fill="#9cc0de"/></svg></body></html>
